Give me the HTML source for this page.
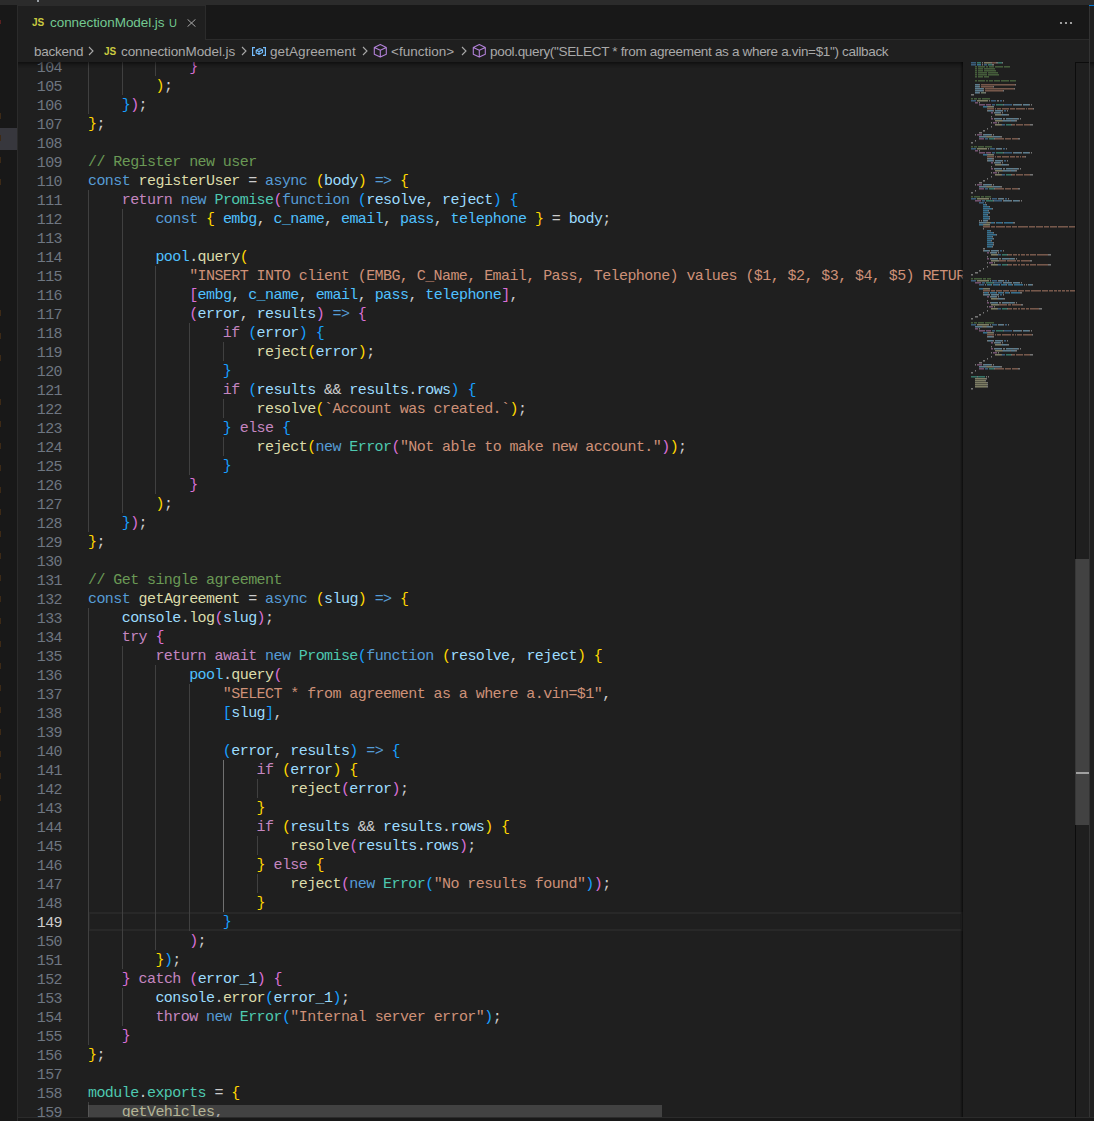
<!DOCTYPE html>
<html><head><meta charset="utf-8">
<style>
*{box-sizing:border-box}
html,body{margin:0;padding:0}
body{width:1094px;height:1121px;overflow:hidden;background:#181818;position:relative;font-family:"Liberation Sans",sans-serif}
.abs{position:absolute}
#top{left:0;top:0;width:1094px;height:5px;background:#2b2b2b}
#side{left:0;top:5px;width:17px;height:1116px;background:#181818}
#sideb{left:17px;top:5px;width:1px;height:1116px;background:#2b2b2b}
#tabs{left:18px;top:5px;width:1071px;height:35px;background:#181818;border-bottom:1px solid #2b2b2b}
#tab{left:18px;top:6px;width:188px;height:34px;background:#1f1f1f;border-right:1px solid #2b2b2b}
#crumbs{left:18px;top:40px;width:1071px;height:22px;background:#1f1f1f}
.ui{position:absolute;white-space:pre;font-size:13px;line-height:16px}
#ed{left:18px;top:62px;width:1071px;height:1055px;background:#1f1f1f;overflow:hidden}
.ln{position:absolute;left:70px;height:19px;line-height:21px;white-space:pre;font-family:"Liberation Mono",monospace;font-size:15px;letter-spacing:-0.573px;color:#cccccc}
.num{position:absolute;left:0;width:44px;text-align:right;height:19px;line-height:23px;font-family:"Liberation Mono",monospace;font-size:15px;letter-spacing:-0.573px;color:#6e7681}
.num.act{color:#cccccc}
.g{position:absolute;width:1px;height:19px;background:#404040}
.g.ga{background:#707070}
#curline{left:70px;width:875px;height:19px;border:2px solid #282828}
#mm{left:945px;top:0;width:112px;height:1055px;background:#1f1f1f}
#mm i{position:absolute;height:1px}
#mmc{position:absolute;left:8px;top:0;width:104px;height:400px}
#mmshadow{left:942px;top:0;width:3px;height:1055px;background:linear-gradient(to right,rgba(0,0,0,0),rgba(0,0,0,.6))}
#vsb{left:1057px;top:0;width:14px;height:1055px;box-shadow:inset 1px 1px 0 #0c0c0c}
#vsl{left:1057px;top:497px;width:14px;height:266px;background:rgba(121,121,121,.4)}
#vcur{left:1058px;top:710px;width:13px;height:2px;background:#a0a0a0}
#hsl{left:70px;top:1043px;width:574px;height:12px;background:rgba(121,121,121,.4)}
#scrollshadow{left:0;top:0;width:945px;height:6px;box-shadow:inset 0 6px 6px -6px #000}
#vsep{left:1089px;top:5px;width:1px;height:1112px;background:#333333}
#rg{left:1090px;top:5px;width:4px;height:1112px;background:#1f1f1f}
#rgtab{left:1089px;top:5px;width:5px;height:1px;background:#0078d4}
#bot{left:17px;top:1117px;width:1077px;height:1px;background:#2b2b2b}
#botb{left:18px;top:1118px;width:1076px;height:3px;background:#181818}
</style></head><body>
<div id="top" class="abs"></div>
<div class="abs" style="left:37px;top:0;width:2px;height:2px;background:#9aa0a6"></div>
<div id="side" class="abs"></div>
<div class="abs" style="left:0;top:128px;width:17px;height:22px;background:#37373d"></div>
<div class="abs" style="left:0;top:113px;width:1px;height:6px;background:#3d2a17"></div><div class="abs" style="left:0;top:135px;width:1px;height:6px;background:#3d2a17"></div><div class="abs" style="left:0;top:157px;width:1px;height:6px;background:#3d2a17"></div><div class="abs" style="left:0;top:179px;width:1px;height:6px;background:#3d2a17"></div><div class="abs" style="left:0;top:310px;width:1px;height:6px;background:#3d2a17"></div><div class="abs" style="left:0;top:333px;width:1px;height:6px;background:#3d2a17"></div><div class="abs" style="left:0;top:355px;width:1px;height:6px;background:#3d2a17"></div><div class="abs" style="left:0;top:399px;width:1px;height:6px;background:#3d2a17"></div><div class="abs" style="left:0;top:421px;width:1px;height:6px;background:#3d2a17"></div><div class="abs" style="left:0;top:443px;width:1px;height:6px;background:#3d2a17"></div><div class="abs" style="left:0;top:465px;width:1px;height:6px;background:#3d2a17"></div><div class="abs" style="left:0;top:487px;width:1px;height:6px;background:#3d2a17"></div><div class="abs" style="left:0;top:509px;width:1px;height:6px;background:#3d2a17"></div><div class="abs" style="left:0;top:531px;width:1px;height:6px;background:#3d2a17"></div><div class="abs" style="left:0;top:553px;width:1px;height:6px;background:#3d2a17"></div><div class="abs" style="left:0;top:575px;width:1px;height:6px;background:#3d2a17"></div><div class="abs" style="left:0;top:596px;width:1px;height:6px;background:#3d2a17"></div><div class="abs" style="left:0;top:618px;width:1px;height:6px;background:#3d2a17"></div><div class="abs" style="left:0;top:641px;width:1px;height:6px;background:#3d2a17"></div><div class="abs" style="left:0;top:663px;width:1px;height:6px;background:#3d2a17"></div><div class="abs" style="left:0;top:685px;width:1px;height:6px;background:#3d2a17"></div><div class="abs" style="left:0;top:707px;width:1px;height:6px;background:#3d2a17"></div><div class="abs" style="left:0;top:729px;width:1px;height:6px;background:#3d2a17"></div><div class="abs" style="left:0;top:751px;width:1px;height:6px;background:#3d2a17"></div><div class="abs" style="left:0;top:773px;width:1px;height:6px;background:#3d2a17"></div><div class="abs" style="left:0;top:795px;width:1px;height:6px;background:#3d2a17"></div><div class="abs" style="left:0;top:20px;width:1px;height:4px;background:#5a2020"></div>
<div id="sideb" class="abs"></div>

<div id="tabs" class="abs"></div>
<div class="abs" style="left:17px;top:5px;width:189px;height:1px;background:#2b2b2b"></div>
<div id="tab" class="abs"></div>
<div class="ui" style="left:32px;top:15px;color:#cbcb41;font-size:10px;font-weight:bold">JS</div>
<div class="ui" style="left:50px;top:15px;color:#73c991;font-size:13.5px;letter-spacing:-0.06px">connectionModel.js</div>
<div class="ui" style="left:169px;top:15px;color:#73c991;font-size:11px">U</div>
<svg class="abs" style="left:187px;top:19px" width="9" height="8" viewBox="0 0 9 8"><path d="M0.5 0.3L8.5 7.7M8.5 0.3L0.5 7.7" stroke="#a8a8a8" stroke-width="1"/></svg>
<svg class="abs" style="left:1059px;top:21px" width="14" height="4" viewBox="0 0 14 4"><circle cx="2" cy="2" r="1.1" fill="#c0c0c0"/><circle cx="7" cy="2" r="1.1" fill="#c0c0c0"/><circle cx="12" cy="2" r="1.1" fill="#c0c0c0"/></svg>

<div id="crumbs" class="abs"></div>
<div class="ui" style="left:34px;top:44px;color:#a9a9a9;font-size:13.5px;letter-spacing:-0.24px">backend</div>
<svg class="abs" style="left:88px;top:46px" width="6" height="10" viewBox="0 0 6 10"><path d="M1 1L5 5L1 9" stroke="#a9a9a9" fill="none" stroke-width="1.1"/></svg>
<div class="ui" style="left:104px;top:44px;color:#cbcb41;font-size:10px;font-weight:bold">JS</div>
<div class="ui" style="left:121px;top:44px;color:#a9a9a9;font-size:13.5px;letter-spacing:-0.08px">connectionModel.js</div>
<svg class="abs" style="left:241px;top:46px" width="6" height="10" viewBox="0 0 6 10"><path d="M1 1L5 5L1 9" stroke="#a9a9a9" fill="none" stroke-width="1.1"/></svg>
<svg class="abs" style="left:248px;top:42px" width="24" height="18" viewBox="0 0 24 18"><path d="M7 5.6H4.6V13.4H7M15 5.6H17.4V13.4H15" stroke="#75beff" fill="none" stroke-width="1.2"/><path d="M8.2 8.3L11.8 6.6L14.6 7.8L14.6 10.4L11 12.4L8.2 11Z M8.2 8.3L11 9.6L14.6 7.8M11 9.6V12.4" stroke="#75beff" fill="none" stroke-width="1.1"/></svg>
<div class="ui" style="left:270px;top:44px;color:#a9a9a9;font-size:13.5px;letter-spacing:0.08px">getAgreement</div>
<svg class="abs" style="left:362px;top:46px" width="6" height="10" viewBox="0 0 6 10"><path d="M1 1L5 5L1 9" stroke="#a9a9a9" fill="none" stroke-width="1.1"/></svg>
<svg class="abs" style="left:372px;top:43px" width="17" height="16" viewBox="0 0 17 16"><path d="M8.3 1.5L14.3 4.4V11.2L8.3 14.1L2.3 11.2V4.4Z M2.3 4.4L8.3 7.3L14.3 4.4 M8.3 7.3V14.1" stroke="#b180d7" fill="none" stroke-width="1.1" stroke-linejoin="round"/></svg>
<div class="ui" style="left:391px;top:44px;color:#a9a9a9;font-size:13.5px;letter-spacing:0px">&lt;function&gt;</div>
<svg class="abs" style="left:461px;top:46px" width="6" height="10" viewBox="0 0 6 10"><path d="M1 1L5 5L1 9" stroke="#a9a9a9" fill="none" stroke-width="1.1"/></svg>
<svg class="abs" style="left:471px;top:43px" width="17" height="16" viewBox="0 0 17 16"><path d="M8.3 1.5L14.3 4.4V11.2L8.3 14.1L2.3 11.2V4.4Z M2.3 4.4L8.3 7.3L14.3 4.4 M8.3 7.3V14.1" stroke="#b180d7" fill="none" stroke-width="1.1" stroke-linejoin="round"/></svg>
<div class="ui" style="left:490px;top:44px;color:#a9a9a9;font-size:13.5px;letter-spacing:-0.32px">pool.query("SELECT * from agreement as a where a.vin=$1") callback</div>

<div id="ed" class="abs">
<div id="curline" class="abs" style="top:850px"></div>
<div class="g" style="left:70px;top:-5px"></div>
<div class="g" style="left:104px;top:-5px"></div>
<div class="g" style="left:137px;top:-5px"></div>
<div class="g" style="left:70px;top:14px"></div>
<div class="g" style="left:104px;top:14px"></div>
<div class="g" style="left:70px;top:33px"></div>
<div class="g" style="left:70px;top:128px"></div>
<div class="g" style="left:70px;top:147px"></div>
<div class="g" style="left:104px;top:147px"></div>
<div class="g" style="left:70px;top:166px"></div>
<div class="g" style="left:104px;top:166px"></div>
<div class="g" style="left:70px;top:185px"></div>
<div class="g" style="left:104px;top:185px"></div>
<div class="g" style="left:70px;top:204px"></div>
<div class="g" style="left:104px;top:204px"></div>
<div class="g" style="left:137px;top:204px"></div>
<div class="g" style="left:70px;top:223px"></div>
<div class="g" style="left:104px;top:223px"></div>
<div class="g" style="left:137px;top:223px"></div>
<div class="g" style="left:70px;top:242px"></div>
<div class="g" style="left:104px;top:242px"></div>
<div class="g" style="left:137px;top:242px"></div>
<div class="g" style="left:70px;top:261px"></div>
<div class="g" style="left:104px;top:261px"></div>
<div class="g" style="left:137px;top:261px"></div>
<div class="g" style="left:171px;top:261px"></div>
<div class="g" style="left:70px;top:280px"></div>
<div class="g" style="left:104px;top:280px"></div>
<div class="g" style="left:137px;top:280px"></div>
<div class="g" style="left:171px;top:280px"></div>
<div class="g" style="left:205px;top:280px"></div>
<div class="g" style="left:70px;top:299px"></div>
<div class="g" style="left:104px;top:299px"></div>
<div class="g" style="left:137px;top:299px"></div>
<div class="g" style="left:171px;top:299px"></div>
<div class="g" style="left:70px;top:318px"></div>
<div class="g" style="left:104px;top:318px"></div>
<div class="g" style="left:137px;top:318px"></div>
<div class="g" style="left:171px;top:318px"></div>
<div class="g" style="left:70px;top:337px"></div>
<div class="g" style="left:104px;top:337px"></div>
<div class="g" style="left:137px;top:337px"></div>
<div class="g" style="left:171px;top:337px"></div>
<div class="g" style="left:205px;top:337px"></div>
<div class="g" style="left:70px;top:356px"></div>
<div class="g" style="left:104px;top:356px"></div>
<div class="g" style="left:137px;top:356px"></div>
<div class="g" style="left:171px;top:356px"></div>
<div class="g" style="left:70px;top:375px"></div>
<div class="g" style="left:104px;top:375px"></div>
<div class="g" style="left:137px;top:375px"></div>
<div class="g" style="left:171px;top:375px"></div>
<div class="g" style="left:205px;top:375px"></div>
<div class="g" style="left:70px;top:394px"></div>
<div class="g" style="left:104px;top:394px"></div>
<div class="g" style="left:137px;top:394px"></div>
<div class="g" style="left:171px;top:394px"></div>
<div class="g" style="left:70px;top:413px"></div>
<div class="g" style="left:104px;top:413px"></div>
<div class="g" style="left:137px;top:413px"></div>
<div class="g" style="left:70px;top:432px"></div>
<div class="g" style="left:104px;top:432px"></div>
<div class="g" style="left:70px;top:451px"></div>
<div class="g" style="left:70px;top:546px"></div>
<div class="g" style="left:70px;top:565px"></div>
<div class="g" style="left:70px;top:584px"></div>
<div class="g" style="left:104px;top:584px"></div>
<div class="g" style="left:70px;top:603px"></div>
<div class="g" style="left:104px;top:603px"></div>
<div class="g" style="left:137px;top:603px"></div>
<div class="g" style="left:70px;top:622px"></div>
<div class="g" style="left:104px;top:622px"></div>
<div class="g" style="left:137px;top:622px"></div>
<div class="g" style="left:171px;top:622px"></div>
<div class="g" style="left:70px;top:641px"></div>
<div class="g" style="left:104px;top:641px"></div>
<div class="g" style="left:137px;top:641px"></div>
<div class="g" style="left:171px;top:641px"></div>
<div class="g" style="left:70px;top:660px"></div>
<div class="g" style="left:104px;top:660px"></div>
<div class="g" style="left:137px;top:660px"></div>
<div class="g" style="left:171px;top:660px"></div>
<div class="g" style="left:70px;top:679px"></div>
<div class="g" style="left:104px;top:679px"></div>
<div class="g" style="left:137px;top:679px"></div>
<div class="g" style="left:171px;top:679px"></div>
<div class="g" style="left:70px;top:698px"></div>
<div class="g" style="left:104px;top:698px"></div>
<div class="g" style="left:137px;top:698px"></div>
<div class="g" style="left:171px;top:698px"></div>
<div class="g ga" style="left:205px;top:698px"></div>
<div class="g" style="left:70px;top:717px"></div>
<div class="g" style="left:104px;top:717px"></div>
<div class="g" style="left:137px;top:717px"></div>
<div class="g" style="left:171px;top:717px"></div>
<div class="g ga" style="left:205px;top:717px"></div>
<div class="g" style="left:239px;top:717px"></div>
<div class="g" style="left:70px;top:736px"></div>
<div class="g" style="left:104px;top:736px"></div>
<div class="g" style="left:137px;top:736px"></div>
<div class="g" style="left:171px;top:736px"></div>
<div class="g ga" style="left:205px;top:736px"></div>
<div class="g" style="left:70px;top:755px"></div>
<div class="g" style="left:104px;top:755px"></div>
<div class="g" style="left:137px;top:755px"></div>
<div class="g" style="left:171px;top:755px"></div>
<div class="g ga" style="left:205px;top:755px"></div>
<div class="g" style="left:70px;top:774px"></div>
<div class="g" style="left:104px;top:774px"></div>
<div class="g" style="left:137px;top:774px"></div>
<div class="g" style="left:171px;top:774px"></div>
<div class="g ga" style="left:205px;top:774px"></div>
<div class="g" style="left:239px;top:774px"></div>
<div class="g" style="left:70px;top:793px"></div>
<div class="g" style="left:104px;top:793px"></div>
<div class="g" style="left:137px;top:793px"></div>
<div class="g" style="left:171px;top:793px"></div>
<div class="g ga" style="left:205px;top:793px"></div>
<div class="g" style="left:70px;top:812px"></div>
<div class="g" style="left:104px;top:812px"></div>
<div class="g" style="left:137px;top:812px"></div>
<div class="g" style="left:171px;top:812px"></div>
<div class="g ga" style="left:205px;top:812px"></div>
<div class="g" style="left:239px;top:812px"></div>
<div class="g" style="left:70px;top:831px"></div>
<div class="g" style="left:104px;top:831px"></div>
<div class="g" style="left:137px;top:831px"></div>
<div class="g" style="left:171px;top:831px"></div>
<div class="g ga" style="left:205px;top:831px"></div>
<div class="g" style="left:70px;top:850px"></div>
<div class="g" style="left:104px;top:850px"></div>
<div class="g" style="left:137px;top:850px"></div>
<div class="g" style="left:171px;top:850px"></div>
<div class="g" style="left:70px;top:869px"></div>
<div class="g" style="left:104px;top:869px"></div>
<div class="g" style="left:137px;top:869px"></div>
<div class="g" style="left:70px;top:888px"></div>
<div class="g" style="left:104px;top:888px"></div>
<div class="g" style="left:70px;top:907px"></div>
<div class="g" style="left:70px;top:926px"></div>
<div class="g" style="left:104px;top:926px"></div>
<div class="g" style="left:70px;top:945px"></div>
<div class="g" style="left:104px;top:945px"></div>
<div class="g" style="left:70px;top:964px"></div>
<div class="g" style="left:70px;top:1040px"></div>
<div class="num" style="top:-5px">104</div>
<div class="num" style="top:14px">105</div>
<div class="num" style="top:33px">106</div>
<div class="num" style="top:52px">107</div>
<div class="num" style="top:71px">108</div>
<div class="num" style="top:90px">109</div>
<div class="num" style="top:109px">110</div>
<div class="num" style="top:128px">111</div>
<div class="num" style="top:147px">112</div>
<div class="num" style="top:166px">113</div>
<div class="num" style="top:185px">114</div>
<div class="num" style="top:204px">115</div>
<div class="num" style="top:223px">116</div>
<div class="num" style="top:242px">117</div>
<div class="num" style="top:261px">118</div>
<div class="num" style="top:280px">119</div>
<div class="num" style="top:299px">120</div>
<div class="num" style="top:318px">121</div>
<div class="num" style="top:337px">122</div>
<div class="num" style="top:356px">123</div>
<div class="num" style="top:375px">124</div>
<div class="num" style="top:394px">125</div>
<div class="num" style="top:413px">126</div>
<div class="num" style="top:432px">127</div>
<div class="num" style="top:451px">128</div>
<div class="num" style="top:470px">129</div>
<div class="num" style="top:489px">130</div>
<div class="num" style="top:508px">131</div>
<div class="num" style="top:527px">132</div>
<div class="num" style="top:546px">133</div>
<div class="num" style="top:565px">134</div>
<div class="num" style="top:584px">135</div>
<div class="num" style="top:603px">136</div>
<div class="num" style="top:622px">137</div>
<div class="num" style="top:641px">138</div>
<div class="num" style="top:660px">139</div>
<div class="num" style="top:679px">140</div>
<div class="num" style="top:698px">141</div>
<div class="num" style="top:717px">142</div>
<div class="num" style="top:736px">143</div>
<div class="num" style="top:755px">144</div>
<div class="num" style="top:774px">145</div>
<div class="num" style="top:793px">146</div>
<div class="num" style="top:812px">147</div>
<div class="num" style="top:831px">148</div>
<div class="num act" style="top:850px">149</div>
<div class="num" style="top:869px">150</div>
<div class="num" style="top:888px">151</div>
<div class="num" style="top:907px">152</div>
<div class="num" style="top:926px">153</div>
<div class="num" style="top:945px">154</div>
<div class="num" style="top:964px">155</div>
<div class="num" style="top:983px">156</div>
<div class="num" style="top:1002px">157</div>
<div class="num" style="top:1021px">158</div>
<div class="num" style="top:1040px">159</div>
<div class="ln" style="top:-5px">            <span style="color:#da70d6">}</span></div>
<div class="ln" style="top:14px">        <span style="color:#ffd700">)</span><span style="color:#cccccc">;</span></div>
<div class="ln" style="top:33px">    <span style="color:#179fff">}</span><span style="color:#da70d6">)</span><span style="color:#cccccc">;</span></div>
<div class="ln" style="top:52px"><span style="color:#ffd700">}</span><span style="color:#cccccc">;</span></div>
<div class="ln" style="top:71px"></div>
<div class="ln" style="top:90px"><span style="color:#6a9955">// Register new user</span></div>
<div class="ln" style="top:109px"><span style="color:#569cd6">const</span> <span style="color:#dcdcaa">registerUser</span> <span style="color:#cccccc">=</span> <span style="color:#569cd6">async</span> <span style="color:#ffd700">(</span><span style="color:#9cdcfe">body</span><span style="color:#ffd700">)</span> <span style="color:#569cd6">=&gt;</span> <span style="color:#ffd700">{</span></div>
<div class="ln" style="top:128px">    <span style="color:#c586c0">return</span> <span style="color:#569cd6">new</span> <span style="color:#4ec9b0">Promise</span><span style="color:#da70d6">(</span><span style="color:#569cd6">function</span> <span style="color:#179fff">(</span><span style="color:#9cdcfe">resolve</span><span style="color:#cccccc">,</span> <span style="color:#9cdcfe">reject</span><span style="color:#179fff">)</span> <span style="color:#179fff">{</span></div>
<div class="ln" style="top:147px">        <span style="color:#569cd6">const</span> <span style="color:#ffd700">{</span> <span style="color:#4fc1ff">embg</span><span style="color:#cccccc">,</span> <span style="color:#4fc1ff">c_name</span><span style="color:#cccccc">,</span> <span style="color:#4fc1ff">email</span><span style="color:#cccccc">,</span> <span style="color:#4fc1ff">pass</span><span style="color:#cccccc">,</span> <span style="color:#4fc1ff">telephone</span> <span style="color:#ffd700">}</span> <span style="color:#cccccc">=</span> <span style="color:#9cdcfe">body</span><span style="color:#cccccc">;</span></div>
<div class="ln" style="top:166px"></div>
<div class="ln" style="top:185px">        <span style="color:#4fc1ff">pool</span><span style="color:#cccccc">.</span><span style="color:#dcdcaa">query</span><span style="color:#ffd700">(</span></div>
<div class="ln" style="top:204px">            <span style="color:#ce9178">"INSERT INTO client (EMBG, C_Name, Email, Pass, Telephone) values ($1, $2, $3, $4, $5) RETURNING *"</span><span style="color:#cccccc">,</span></div>
<div class="ln" style="top:223px">            <span style="color:#da70d6">[</span><span style="color:#4fc1ff">embg</span><span style="color:#cccccc">,</span> <span style="color:#4fc1ff">c_name</span><span style="color:#cccccc">,</span> <span style="color:#4fc1ff">email</span><span style="color:#cccccc">,</span> <span style="color:#4fc1ff">pass</span><span style="color:#cccccc">,</span> <span style="color:#4fc1ff">telephone</span><span style="color:#da70d6">]</span><span style="color:#cccccc">,</span></div>
<div class="ln" style="top:242px">            <span style="color:#da70d6">(</span><span style="color:#9cdcfe">error</span><span style="color:#cccccc">,</span> <span style="color:#9cdcfe">results</span><span style="color:#da70d6">)</span> <span style="color:#569cd6">=&gt;</span> <span style="color:#da70d6">{</span></div>
<div class="ln" style="top:261px">                <span style="color:#c586c0">if</span> <span style="color:#179fff">(</span><span style="color:#9cdcfe">error</span><span style="color:#179fff">)</span> <span style="color:#179fff">{</span></div>
<div class="ln" style="top:280px">                    <span style="color:#dcdcaa">reject</span><span style="color:#ffd700">(</span><span style="color:#9cdcfe">error</span><span style="color:#ffd700">)</span><span style="color:#cccccc">;</span></div>
<div class="ln" style="top:299px">                <span style="color:#179fff">}</span></div>
<div class="ln" style="top:318px">                <span style="color:#c586c0">if</span> <span style="color:#179fff">(</span><span style="color:#9cdcfe">results</span> <span style="color:#cccccc">&amp;</span><span style="color:#cccccc">&amp;</span> <span style="color:#9cdcfe">results</span><span style="color:#cccccc">.</span><span style="color:#9cdcfe">rows</span><span style="color:#179fff">)</span> <span style="color:#179fff">{</span></div>
<div class="ln" style="top:337px">                    <span style="color:#dcdcaa">resolve</span><span style="color:#ffd700">(</span><span style="color:#ce9178">`Account was created.`</span><span style="color:#ffd700">)</span><span style="color:#cccccc">;</span></div>
<div class="ln" style="top:356px">                <span style="color:#179fff">}</span> <span style="color:#c586c0">else</span> <span style="color:#179fff">{</span></div>
<div class="ln" style="top:375px">                    <span style="color:#dcdcaa">reject</span><span style="color:#ffd700">(</span><span style="color:#569cd6">new</span> <span style="color:#4ec9b0">Error</span><span style="color:#da70d6">(</span><span style="color:#ce9178">"Not able to make new account."</span><span style="color:#da70d6">)</span><span style="color:#ffd700">)</span><span style="color:#cccccc">;</span></div>
<div class="ln" style="top:394px">                <span style="color:#179fff">}</span></div>
<div class="ln" style="top:413px">            <span style="color:#da70d6">}</span></div>
<div class="ln" style="top:432px">        <span style="color:#ffd700">)</span><span style="color:#cccccc">;</span></div>
<div class="ln" style="top:451px">    <span style="color:#179fff">}</span><span style="color:#da70d6">)</span><span style="color:#cccccc">;</span></div>
<div class="ln" style="top:470px"><span style="color:#ffd700">}</span><span style="color:#cccccc">;</span></div>
<div class="ln" style="top:489px"></div>
<div class="ln" style="top:508px"><span style="color:#6a9955">// Get single agreement</span></div>
<div class="ln" style="top:527px"><span style="color:#569cd6">const</span> <span style="color:#dcdcaa">getAgreement</span> <span style="color:#cccccc">=</span> <span style="color:#569cd6">async</span> <span style="color:#ffd700">(</span><span style="color:#9cdcfe">slug</span><span style="color:#ffd700">)</span> <span style="color:#569cd6">=&gt;</span> <span style="color:#ffd700">{</span></div>
<div class="ln" style="top:546px">    <span style="color:#9cdcfe">console</span><span style="color:#cccccc">.</span><span style="color:#dcdcaa">log</span><span style="color:#da70d6">(</span><span style="color:#9cdcfe">slug</span><span style="color:#da70d6">)</span><span style="color:#cccccc">;</span></div>
<div class="ln" style="top:565px">    <span style="color:#c586c0">try</span> <span style="color:#da70d6">{</span></div>
<div class="ln" style="top:584px">        <span style="color:#c586c0">return</span> <span style="color:#c586c0">await</span> <span style="color:#569cd6">new</span> <span style="color:#4ec9b0">Promise</span><span style="color:#179fff">(</span><span style="color:#569cd6">function</span> <span style="color:#ffd700">(</span><span style="color:#9cdcfe">resolve</span><span style="color:#cccccc">,</span> <span style="color:#9cdcfe">reject</span><span style="color:#ffd700">)</span> <span style="color:#ffd700">{</span></div>
<div class="ln" style="top:603px">            <span style="color:#4fc1ff">pool</span><span style="color:#cccccc">.</span><span style="color:#dcdcaa">query</span><span style="color:#da70d6">(</span></div>
<div class="ln" style="top:622px">                <span style="color:#ce9178">"SELECT * from agreement as a where a.vin=$1"</span><span style="color:#cccccc">,</span></div>
<div class="ln" style="top:641px">                <span style="color:#179fff">[</span><span style="color:#9cdcfe">slug</span><span style="color:#179fff">]</span><span style="color:#cccccc">,</span></div>
<div class="ln" style="top:660px"></div>
<div class="ln" style="top:679px">                <span style="color:#179fff">(</span><span style="color:#9cdcfe">error</span><span style="color:#cccccc">,</span> <span style="color:#9cdcfe">results</span><span style="color:#179fff">)</span> <span style="color:#569cd6">=&gt;</span> <span style="color:#179fff">{</span></div>
<div class="ln" style="top:698px">                    <span style="color:#c586c0">if</span> <span style="color:#ffd700">(</span><span style="color:#9cdcfe">error</span><span style="color:#ffd700">)</span> <span style="color:#ffd700">{</span></div>
<div class="ln" style="top:717px">                        <span style="color:#dcdcaa">reject</span><span style="color:#da70d6">(</span><span style="color:#9cdcfe">error</span><span style="color:#da70d6">)</span><span style="color:#cccccc">;</span></div>
<div class="ln" style="top:736px">                    <span style="color:#ffd700">}</span></div>
<div class="ln" style="top:755px">                    <span style="color:#c586c0">if</span> <span style="color:#ffd700">(</span><span style="color:#9cdcfe">results</span> <span style="color:#cccccc">&amp;</span><span style="color:#cccccc">&amp;</span> <span style="color:#9cdcfe">results</span><span style="color:#cccccc">.</span><span style="color:#9cdcfe">rows</span><span style="color:#ffd700">)</span> <span style="color:#ffd700">{</span></div>
<div class="ln" style="top:774px">                        <span style="color:#dcdcaa">resolve</span><span style="color:#da70d6">(</span><span style="color:#9cdcfe">results</span><span style="color:#cccccc">.</span><span style="color:#9cdcfe">rows</span><span style="color:#da70d6">)</span><span style="color:#cccccc">;</span></div>
<div class="ln" style="top:793px">                    <span style="color:#ffd700">}</span> <span style="color:#c586c0">else</span> <span style="color:#ffd700">{</span></div>
<div class="ln" style="top:812px">                        <span style="color:#dcdcaa">reject</span><span style="color:#da70d6">(</span><span style="color:#569cd6">new</span> <span style="color:#4ec9b0">Error</span><span style="color:#179fff">(</span><span style="color:#ce9178">"No results found"</span><span style="color:#179fff">)</span><span style="color:#da70d6">)</span><span style="color:#cccccc">;</span></div>
<div class="ln" style="top:831px">                    <span style="color:#ffd700">}</span></div>
<div class="ln" style="top:850px">                <span style="color:#179fff">}</span></div>
<div class="ln" style="top:869px">            <span style="color:#da70d6">)</span><span style="color:#cccccc">;</span></div>
<div class="ln" style="top:888px">        <span style="color:#ffd700">}</span><span style="color:#179fff">)</span><span style="color:#cccccc">;</span></div>
<div class="ln" style="top:907px">    <span style="color:#da70d6">}</span> <span style="color:#c586c0">catch</span> <span style="color:#da70d6">(</span><span style="color:#9cdcfe">error_1</span><span style="color:#da70d6">)</span> <span style="color:#da70d6">{</span></div>
<div class="ln" style="top:926px">        <span style="color:#9cdcfe">console</span><span style="color:#cccccc">.</span><span style="color:#dcdcaa">error</span><span style="color:#179fff">(</span><span style="color:#9cdcfe">error_1</span><span style="color:#179fff">)</span><span style="color:#cccccc">;</span></div>
<div class="ln" style="top:945px">        <span style="color:#c586c0">throw</span> <span style="color:#569cd6">new</span> <span style="color:#4ec9b0">Error</span><span style="color:#179fff">(</span><span style="color:#ce9178">"Internal server error"</span><span style="color:#179fff">)</span><span style="color:#cccccc">;</span></div>
<div class="ln" style="top:964px">    <span style="color:#da70d6">}</span></div>
<div class="ln" style="top:983px"><span style="color:#ffd700">}</span><span style="color:#cccccc">;</span></div>
<div class="ln" style="top:1002px"></div>
<div class="ln" style="top:1021px"><span style="color:#4ec9b0">module</span><span style="color:#cccccc">.</span><span style="color:#4ec9b0">exports</span> <span style="color:#cccccc">=</span> <span style="color:#ffd700">{</span></div>
<div class="ln" style="top:1040px">    <span style="color:#dcdcaa">getVehicles</span><span style="color:#cccccc">,</span></div>
<div id="mmshadow" class="abs"></div>
<div id="mm" class="abs"><div id="mmc"><i style="left:0px;top:0px;width:5px;background:rgba(86,156,214,.5);box-shadow:0 1px 0 rgba(86,156,214,.28)"></i><i style="left:6px;top:0px;width:4px;background:rgba(78,201,176,.5);box-shadow:0 1px 0 rgba(78,201,176,.28)"></i><i style="left:11px;top:0px;width:1px;background:rgba(204,204,204,.5);box-shadow:0 1px 0 rgba(204,204,204,.28)"></i><i style="left:13px;top:0px;width:7px;background:rgba(220,220,170,.5);box-shadow:0 1px 0 rgba(220,220,170,.28)"></i><i style="left:20px;top:0px;width:1px;background:rgba(204,204,204,.5);box-shadow:0 1px 0 rgba(204,204,204,.28)"></i><i style="left:21px;top:0px;width:4px;background:rgba(206,145,120,.5);box-shadow:0 1px 0 rgba(206,145,120,.28)"></i><i style="left:25px;top:0px;width:1px;background:rgba(204,204,204,.5);box-shadow:0 1px 0 rgba(204,204,204,.28)"></i><i style="left:26px;top:0px;width:1px;background:rgba(204,204,204,.5);box-shadow:0 1px 0 rgba(204,204,204,.28)"></i><i style="left:27px;top:0px;width:4px;background:rgba(78,201,176,.5);box-shadow:0 1px 0 rgba(78,201,176,.28)"></i><i style="left:31px;top:0px;width:1px;background:rgba(204,204,204,.5);box-shadow:0 1px 0 rgba(204,204,204,.28)"></i><i style="left:0px;top:2px;width:5px;background:rgba(86,156,214,.5);box-shadow:0 1px 0 rgba(86,156,214,.28)"></i><i style="left:6px;top:2px;width:4px;background:rgba(79,193,255,.5);box-shadow:0 1px 0 rgba(79,193,255,.28)"></i><i style="left:11px;top:2px;width:1px;background:rgba(204,204,204,.5);box-shadow:0 1px 0 rgba(204,204,204,.28)"></i><i style="left:13px;top:2px;width:3px;background:rgba(86,156,214,.5);box-shadow:0 1px 0 rgba(86,156,214,.28)"></i><i style="left:17px;top:2px;width:4px;background:rgba(78,201,176,.5);box-shadow:0 1px 0 rgba(78,201,176,.28)"></i><i style="left:21px;top:2px;width:1px;background:rgba(204,204,204,.5);box-shadow:0 1px 0 rgba(204,204,204,.28)"></i><i style="left:22px;top:2px;width:1px;background:rgba(204,204,204,.5);box-shadow:0 1px 0 rgba(204,204,204,.28)"></i><i style="left:4px;top:4px;width:2px;background:rgba(106,153,85,.5);box-shadow:0 1px 0 rgba(106,153,85,.28)"></i><i style="left:7px;top:4px;width:7px;background:rgba(106,153,85,.5);box-shadow:0 1px 0 rgba(106,153,85,.28)"></i><i style="left:15px;top:4px;width:2px;background:rgba(106,153,85,.5);box-shadow:0 1px 0 rgba(106,153,85,.28)"></i><i style="left:18px;top:4px;width:5px;background:rgba(106,153,85,.5);box-shadow:0 1px 0 rgba(106,153,85,.28)"></i><i style="left:24px;top:4px;width:8px;background:rgba(106,153,85,.5);box-shadow:0 1px 0 rgba(106,153,85,.28)"></i><i style="left:33px;top:4px;width:6px;background:rgba(106,153,85,.5);box-shadow:0 1px 0 rgba(106,153,85,.28)"></i><i style="left:4px;top:6px;width:2px;background:rgba(106,153,85,.5);box-shadow:0 1px 0 rgba(106,153,85,.28)"></i><i style="left:7px;top:6px;width:5px;background:rgba(106,153,85,.5);box-shadow:0 1px 0 rgba(106,153,85,.28)"></i><i style="left:13px;top:6px;width:11px;background:rgba(106,153,85,.5);box-shadow:0 1px 0 rgba(106,153,85,.28)"></i><i style="left:4px;top:8px;width:2px;background:rgba(106,153,85,.5);box-shadow:0 1px 0 rgba(106,153,85,.28)"></i><i style="left:7px;top:8px;width:5px;background:rgba(106,153,85,.5);box-shadow:0 1px 0 rgba(106,153,85,.28)"></i><i style="left:13px;top:8px;width:12px;background:rgba(106,153,85,.5);box-shadow:0 1px 0 rgba(106,153,85,.28)"></i><i style="left:4px;top:10px;width:2px;background:rgba(106,153,85,.5);box-shadow:0 1px 0 rgba(106,153,85,.28)"></i><i style="left:7px;top:10px;width:9px;background:rgba(106,153,85,.5);box-shadow:0 1px 0 rgba(106,153,85,.28)"></i><i style="left:17px;top:10px;width:10px;background:rgba(106,153,85,.5);box-shadow:0 1px 0 rgba(106,153,85,.28)"></i><i style="left:4px;top:12px;width:2px;background:rgba(106,153,85,.5);box-shadow:0 1px 0 rgba(106,153,85,.28)"></i><i style="left:7px;top:12px;width:9px;background:rgba(106,153,85,.5);box-shadow:0 1px 0 rgba(106,153,85,.28)"></i><i style="left:17px;top:12px;width:11px;background:rgba(106,153,85,.5);box-shadow:0 1px 0 rgba(106,153,85,.28)"></i><i style="left:4px;top:14px;width:2px;background:rgba(106,153,85,.5);box-shadow:0 1px 0 rgba(106,153,85,.28)"></i><i style="left:7px;top:14px;width:5px;background:rgba(106,153,85,.5);box-shadow:0 1px 0 rgba(106,153,85,.28)"></i><i style="left:13px;top:14px;width:5px;background:rgba(106,153,85,.5);box-shadow:0 1px 0 rgba(106,153,85,.28)"></i><i style="left:4px;top:18px;width:2px;background:rgba(106,153,85,.5);box-shadow:0 1px 0 rgba(106,153,85,.28)"></i><i style="left:7px;top:18px;width:7px;background:rgba(106,153,85,.5);box-shadow:0 1px 0 rgba(106,153,85,.28)"></i><i style="left:15px;top:18px;width:2px;background:rgba(106,153,85,.5);box-shadow:0 1px 0 rgba(106,153,85,.28)"></i><i style="left:18px;top:18px;width:4px;background:rgba(106,153,85,.5);box-shadow:0 1px 0 rgba(106,153,85,.28)"></i><i style="left:23px;top:18px;width:6px;background:rgba(106,153,85,.5);box-shadow:0 1px 0 rgba(106,153,85,.28)"></i><i style="left:30px;top:18px;width:8px;background:rgba(106,153,85,.5);box-shadow:0 1px 0 rgba(106,153,85,.28)"></i><i style="left:39px;top:18px;width:6px;background:rgba(106,153,85,.5);box-shadow:0 1px 0 rgba(106,153,85,.28)"></i><i style="left:4px;top:22px;width:4px;background:rgba(156,220,254,.5);box-shadow:0 1px 0 rgba(156,220,254,.28)"></i><i style="left:8px;top:22px;width:1px;background:rgba(204,204,204,.5);box-shadow:0 1px 0 rgba(204,204,204,.28)"></i><i style="left:10px;top:22px;width:34px;background:rgba(206,145,120,.5);box-shadow:0 1px 0 rgba(206,145,120,.28)"></i><i style="left:44px;top:22px;width:1px;background:rgba(204,204,204,.5);box-shadow:0 1px 0 rgba(204,204,204,.28)"></i><i style="left:4px;top:24px;width:4px;background:rgba(156,220,254,.5);box-shadow:0 1px 0 rgba(156,220,254,.28)"></i><i style="left:8px;top:24px;width:1px;background:rgba(204,204,204,.5);box-shadow:0 1px 0 rgba(204,204,204,.28)"></i><i style="left:10px;top:24px;width:12px;background:rgba(206,145,120,.5);box-shadow:0 1px 0 rgba(206,145,120,.28)"></i><i style="left:22px;top:24px;width:1px;background:rgba(204,204,204,.5);box-shadow:0 1px 0 rgba(204,204,204,.28)"></i><i style="left:4px;top:26px;width:8px;background:rgba(156,220,254,.5);box-shadow:0 1px 0 rgba(156,220,254,.28)"></i><i style="left:12px;top:26px;width:1px;background:rgba(204,204,204,.5);box-shadow:0 1px 0 rgba(204,204,204,.28)"></i><i style="left:14px;top:26px;width:29px;background:rgba(206,145,120,.5);box-shadow:0 1px 0 rgba(206,145,120,.28)"></i><i style="left:43px;top:26px;width:1px;background:rgba(204,204,204,.5);box-shadow:0 1px 0 rgba(204,204,204,.28)"></i><i style="left:4px;top:28px;width:8px;background:rgba(156,220,254,.5);box-shadow:0 1px 0 rgba(156,220,254,.28)"></i><i style="left:12px;top:28px;width:1px;background:rgba(204,204,204,.5);box-shadow:0 1px 0 rgba(204,204,204,.28)"></i><i style="left:14px;top:28px;width:18px;background:rgba(206,145,120,.5);box-shadow:0 1px 0 rgba(206,145,120,.28)"></i><i style="left:32px;top:28px;width:1px;background:rgba(204,204,204,.5);box-shadow:0 1px 0 rgba(204,204,204,.28)"></i><i style="left:4px;top:30px;width:4px;background:rgba(156,220,254,.5);box-shadow:0 1px 0 rgba(156,220,254,.28)"></i><i style="left:8px;top:30px;width:1px;background:rgba(204,204,204,.5);box-shadow:0 1px 0 rgba(204,204,204,.28)"></i><i style="left:10px;top:30px;width:4px;background:rgba(181,206,168,.5);box-shadow:0 1px 0 rgba(181,206,168,.28)"></i><i style="left:14px;top:30px;width:1px;background:rgba(204,204,204,.5);box-shadow:0 1px 0 rgba(204,204,204,.28)"></i><i style="left:0px;top:32px;width:1px;background:rgba(204,204,204,.5);box-shadow:0 1px 0 rgba(204,204,204,.28)"></i><i style="left:1px;top:32px;width:1px;background:rgba(204,204,204,.5);box-shadow:0 1px 0 rgba(204,204,204,.28)"></i><i style="left:2px;top:32px;width:1px;background:rgba(204,204,204,.5);box-shadow:0 1px 0 rgba(204,204,204,.28)"></i><i style="left:0px;top:36px;width:2px;background:rgba(106,153,85,.5);box-shadow:0 1px 0 rgba(106,153,85,.28)"></i><i style="left:3px;top:36px;width:3px;background:rgba(106,153,85,.5);box-shadow:0 1px 0 rgba(106,153,85,.28)"></i><i style="left:7px;top:36px;width:3px;background:rgba(106,153,85,.5);box-shadow:0 1px 0 rgba(106,153,85,.28)"></i><i style="left:11px;top:36px;width:8px;background:rgba(106,153,85,.5);box-shadow:0 1px 0 rgba(106,153,85,.28)"></i><i style="left:0px;top:38px;width:5px;background:rgba(86,156,214,.5);box-shadow:0 1px 0 rgba(86,156,214,.28)"></i><i style="left:6px;top:38px;width:11px;background:rgba(220,220,170,.5);box-shadow:0 1px 0 rgba(220,220,170,.28)"></i><i style="left:18px;top:38px;width:1px;background:rgba(204,204,204,.5);box-shadow:0 1px 0 rgba(204,204,204,.28)"></i><i style="left:20px;top:38px;width:5px;background:rgba(86,156,214,.5);box-shadow:0 1px 0 rgba(86,156,214,.28)"></i><i style="left:26px;top:38px;width:1px;background:rgba(204,204,204,.5);box-shadow:0 1px 0 rgba(204,204,204,.28)"></i><i style="left:27px;top:38px;width:1px;background:rgba(204,204,204,.5);box-shadow:0 1px 0 rgba(204,204,204,.28)"></i><i style="left:29px;top:38px;width:2px;background:rgba(86,156,214,.5);box-shadow:0 1px 0 rgba(86,156,214,.28)"></i><i style="left:32px;top:38px;width:1px;background:rgba(204,204,204,.5);box-shadow:0 1px 0 rgba(204,204,204,.28)"></i><i style="left:4px;top:40px;width:3px;background:rgba(197,134,192,.5);box-shadow:0 1px 0 rgba(197,134,192,.28)"></i><i style="left:8px;top:40px;width:1px;background:rgba(204,204,204,.5);box-shadow:0 1px 0 rgba(204,204,204,.28)"></i><i style="left:8px;top:42px;width:6px;background:rgba(197,134,192,.5);box-shadow:0 1px 0 rgba(197,134,192,.28)"></i><i style="left:15px;top:42px;width:5px;background:rgba(197,134,192,.5);box-shadow:0 1px 0 rgba(197,134,192,.28)"></i><i style="left:21px;top:42px;width:3px;background:rgba(86,156,214,.5);box-shadow:0 1px 0 rgba(86,156,214,.28)"></i><i style="left:25px;top:42px;width:7px;background:rgba(78,201,176,.5);box-shadow:0 1px 0 rgba(78,201,176,.28)"></i><i style="left:32px;top:42px;width:1px;background:rgba(204,204,204,.5);box-shadow:0 1px 0 rgba(204,204,204,.28)"></i><i style="left:33px;top:42px;width:8px;background:rgba(86,156,214,.5);box-shadow:0 1px 0 rgba(86,156,214,.28)"></i><i style="left:42px;top:42px;width:1px;background:rgba(204,204,204,.5);box-shadow:0 1px 0 rgba(204,204,204,.28)"></i><i style="left:43px;top:42px;width:7px;background:rgba(156,220,254,.5);box-shadow:0 1px 0 rgba(156,220,254,.28)"></i><i style="left:50px;top:42px;width:1px;background:rgba(204,204,204,.5);box-shadow:0 1px 0 rgba(204,204,204,.28)"></i><i style="left:52px;top:42px;width:6px;background:rgba(156,220,254,.5);box-shadow:0 1px 0 rgba(156,220,254,.28)"></i><i style="left:58px;top:42px;width:1px;background:rgba(204,204,204,.5);box-shadow:0 1px 0 rgba(204,204,204,.28)"></i><i style="left:60px;top:42px;width:1px;background:rgba(204,204,204,.5);box-shadow:0 1px 0 rgba(204,204,204,.28)"></i><i style="left:12px;top:44px;width:4px;background:rgba(79,193,255,.5);box-shadow:0 1px 0 rgba(79,193,255,.28)"></i><i style="left:16px;top:44px;width:1px;background:rgba(204,204,204,.5);box-shadow:0 1px 0 rgba(204,204,204,.28)"></i><i style="left:17px;top:44px;width:5px;background:rgba(220,220,170,.5);box-shadow:0 1px 0 rgba(220,220,170,.28)"></i><i style="left:22px;top:44px;width:1px;background:rgba(204,204,204,.5);box-shadow:0 1px 0 rgba(204,204,204,.28)"></i><i style="left:16px;top:46px;width:7px;background:rgba(206,145,120,.5);box-shadow:0 1px 0 rgba(206,145,120,.28)"></i><i style="left:24px;top:46px;width:1px;background:rgba(206,145,120,.5);box-shadow:0 1px 0 rgba(206,145,120,.28)"></i><i style="left:26px;top:46px;width:4px;background:rgba(206,145,120,.5);box-shadow:0 1px 0 rgba(206,145,120,.28)"></i><i style="left:31px;top:46px;width:7px;background:rgba(206,145,120,.5);box-shadow:0 1px 0 rgba(206,145,120,.28)"></i><i style="left:39px;top:46px;width:5px;background:rgba(206,145,120,.5);box-shadow:0 1px 0 rgba(206,145,120,.28)"></i><i style="left:45px;top:46px;width:9px;background:rgba(206,145,120,.5);box-shadow:0 1px 0 rgba(206,145,120,.28)"></i><i style="left:55px;top:46px;width:1px;background:rgba(206,145,120,.5);box-shadow:0 1px 0 rgba(206,145,120,.28)"></i><i style="left:57px;top:46px;width:5px;background:rgba(206,145,120,.5);box-shadow:0 1px 0 rgba(206,145,120,.28)"></i><i style="left:62px;top:46px;width:1px;background:rgba(204,204,204,.5);box-shadow:0 1px 0 rgba(204,204,204,.28)"></i><i style="left:16px;top:48px;width:1px;background:rgba(204,204,204,.5);box-shadow:0 1px 0 rgba(204,204,204,.28)"></i><i style="left:17px;top:48px;width:5px;background:rgba(156,220,254,.5);box-shadow:0 1px 0 rgba(156,220,254,.28)"></i><i style="left:22px;top:48px;width:1px;background:rgba(204,204,204,.5);box-shadow:0 1px 0 rgba(204,204,204,.28)"></i><i style="left:24px;top:48px;width:7px;background:rgba(156,220,254,.5);box-shadow:0 1px 0 rgba(156,220,254,.28)"></i><i style="left:31px;top:48px;width:1px;background:rgba(204,204,204,.5);box-shadow:0 1px 0 rgba(204,204,204,.28)"></i><i style="left:33px;top:48px;width:2px;background:rgba(86,156,214,.5);box-shadow:0 1px 0 rgba(86,156,214,.28)"></i><i style="left:36px;top:48px;width:1px;background:rgba(204,204,204,.5);box-shadow:0 1px 0 rgba(204,204,204,.28)"></i><i style="left:20px;top:50px;width:2px;background:rgba(197,134,192,.5);box-shadow:0 1px 0 rgba(197,134,192,.28)"></i><i style="left:23px;top:50px;width:1px;background:rgba(204,204,204,.5);box-shadow:0 1px 0 rgba(204,204,204,.28)"></i><i style="left:24px;top:50px;width:5px;background:rgba(156,220,254,.5);box-shadow:0 1px 0 rgba(156,220,254,.28)"></i><i style="left:29px;top:50px;width:1px;background:rgba(204,204,204,.5);box-shadow:0 1px 0 rgba(204,204,204,.28)"></i><i style="left:31px;top:50px;width:1px;background:rgba(204,204,204,.5);box-shadow:0 1px 0 rgba(204,204,204,.28)"></i><i style="left:24px;top:52px;width:6px;background:rgba(220,220,170,.5);box-shadow:0 1px 0 rgba(220,220,170,.28)"></i><i style="left:30px;top:52px;width:1px;background:rgba(204,204,204,.5);box-shadow:0 1px 0 rgba(204,204,204,.28)"></i><i style="left:31px;top:52px;width:5px;background:rgba(156,220,254,.5);box-shadow:0 1px 0 rgba(156,220,254,.28)"></i><i style="left:36px;top:52px;width:1px;background:rgba(204,204,204,.5);box-shadow:0 1px 0 rgba(204,204,204,.28)"></i><i style="left:37px;top:52px;width:1px;background:rgba(204,204,204,.5);box-shadow:0 1px 0 rgba(204,204,204,.28)"></i><i style="left:20px;top:54px;width:1px;background:rgba(204,204,204,.5);box-shadow:0 1px 0 rgba(204,204,204,.28)"></i><i style="left:20px;top:56px;width:2px;background:rgba(197,134,192,.5);box-shadow:0 1px 0 rgba(197,134,192,.28)"></i><i style="left:23px;top:56px;width:1px;background:rgba(204,204,204,.5);box-shadow:0 1px 0 rgba(204,204,204,.28)"></i><i style="left:24px;top:56px;width:7px;background:rgba(156,220,254,.5);box-shadow:0 1px 0 rgba(156,220,254,.28)"></i><i style="left:32px;top:56px;width:1px;background:rgba(204,204,204,.5);box-shadow:0 1px 0 rgba(204,204,204,.28)"></i><i style="left:33px;top:56px;width:1px;background:rgba(204,204,204,.5);box-shadow:0 1px 0 rgba(204,204,204,.28)"></i><i style="left:35px;top:56px;width:7px;background:rgba(156,220,254,.5);box-shadow:0 1px 0 rgba(156,220,254,.28)"></i><i style="left:42px;top:56px;width:1px;background:rgba(204,204,204,.5);box-shadow:0 1px 0 rgba(204,204,204,.28)"></i><i style="left:43px;top:56px;width:4px;background:rgba(156,220,254,.5);box-shadow:0 1px 0 rgba(156,220,254,.28)"></i><i style="left:47px;top:56px;width:1px;background:rgba(204,204,204,.5);box-shadow:0 1px 0 rgba(204,204,204,.28)"></i><i style="left:49px;top:56px;width:1px;background:rgba(204,204,204,.5);box-shadow:0 1px 0 rgba(204,204,204,.28)"></i><i style="left:24px;top:58px;width:7px;background:rgba(220,220,170,.5);box-shadow:0 1px 0 rgba(220,220,170,.28)"></i><i style="left:31px;top:58px;width:1px;background:rgba(204,204,204,.5);box-shadow:0 1px 0 rgba(204,204,204,.28)"></i><i style="left:32px;top:58px;width:7px;background:rgba(156,220,254,.5);box-shadow:0 1px 0 rgba(156,220,254,.28)"></i><i style="left:39px;top:58px;width:1px;background:rgba(204,204,204,.5);box-shadow:0 1px 0 rgba(204,204,204,.28)"></i><i style="left:40px;top:58px;width:4px;background:rgba(156,220,254,.5);box-shadow:0 1px 0 rgba(156,220,254,.28)"></i><i style="left:44px;top:58px;width:1px;background:rgba(204,204,204,.5);box-shadow:0 1px 0 rgba(204,204,204,.28)"></i><i style="left:45px;top:58px;width:1px;background:rgba(204,204,204,.5);box-shadow:0 1px 0 rgba(204,204,204,.28)"></i><i style="left:20px;top:60px;width:1px;background:rgba(204,204,204,.5);box-shadow:0 1px 0 rgba(204,204,204,.28)"></i><i style="left:22px;top:60px;width:4px;background:rgba(197,134,192,.5);box-shadow:0 1px 0 rgba(197,134,192,.28)"></i><i style="left:27px;top:60px;width:1px;background:rgba(204,204,204,.5);box-shadow:0 1px 0 rgba(204,204,204,.28)"></i><i style="left:24px;top:62px;width:6px;background:rgba(220,220,170,.5);box-shadow:0 1px 0 rgba(220,220,170,.28)"></i><i style="left:30px;top:62px;width:1px;background:rgba(204,204,204,.5);box-shadow:0 1px 0 rgba(204,204,204,.28)"></i><i style="left:31px;top:62px;width:3px;background:rgba(86,156,214,.5);box-shadow:0 1px 0 rgba(86,156,214,.28)"></i><i style="left:35px;top:62px;width:5px;background:rgba(78,201,176,.5);box-shadow:0 1px 0 rgba(78,201,176,.28)"></i><i style="left:40px;top:62px;width:1px;background:rgba(204,204,204,.5);box-shadow:0 1px 0 rgba(204,204,204,.28)"></i><i style="left:41px;top:62px;width:3px;background:rgba(206,145,120,.5);box-shadow:0 1px 0 rgba(206,145,120,.28)"></i><i style="left:45px;top:62px;width:7px;background:rgba(206,145,120,.5);box-shadow:0 1px 0 rgba(206,145,120,.28)"></i><i style="left:53px;top:62px;width:6px;background:rgba(206,145,120,.5);box-shadow:0 1px 0 rgba(206,145,120,.28)"></i><i style="left:59px;top:62px;width:1px;background:rgba(204,204,204,.5);box-shadow:0 1px 0 rgba(204,204,204,.28)"></i><i style="left:60px;top:62px;width:1px;background:rgba(204,204,204,.5);box-shadow:0 1px 0 rgba(204,204,204,.28)"></i><i style="left:61px;top:62px;width:1px;background:rgba(204,204,204,.5);box-shadow:0 1px 0 rgba(204,204,204,.28)"></i><i style="left:20px;top:64px;width:1px;background:rgba(204,204,204,.5);box-shadow:0 1px 0 rgba(204,204,204,.28)"></i><i style="left:16px;top:66px;width:1px;background:rgba(204,204,204,.5);box-shadow:0 1px 0 rgba(204,204,204,.28)"></i><i style="left:12px;top:68px;width:1px;background:rgba(204,204,204,.5);box-shadow:0 1px 0 rgba(204,204,204,.28)"></i><i style="left:13px;top:68px;width:1px;background:rgba(204,204,204,.5);box-shadow:0 1px 0 rgba(204,204,204,.28)"></i><i style="left:8px;top:70px;width:1px;background:rgba(204,204,204,.5);box-shadow:0 1px 0 rgba(204,204,204,.28)"></i><i style="left:9px;top:70px;width:1px;background:rgba(204,204,204,.5);box-shadow:0 1px 0 rgba(204,204,204,.28)"></i><i style="left:10px;top:70px;width:1px;background:rgba(204,204,204,.5);box-shadow:0 1px 0 rgba(204,204,204,.28)"></i><i style="left:4px;top:72px;width:1px;background:rgba(204,204,204,.5);box-shadow:0 1px 0 rgba(204,204,204,.28)"></i><i style="left:6px;top:72px;width:5px;background:rgba(197,134,192,.5);box-shadow:0 1px 0 rgba(197,134,192,.28)"></i><i style="left:12px;top:72px;width:1px;background:rgba(204,204,204,.5);box-shadow:0 1px 0 rgba(204,204,204,.28)"></i><i style="left:13px;top:72px;width:7px;background:rgba(156,220,254,.5);box-shadow:0 1px 0 rgba(156,220,254,.28)"></i><i style="left:20px;top:72px;width:1px;background:rgba(204,204,204,.5);box-shadow:0 1px 0 rgba(204,204,204,.28)"></i><i style="left:22px;top:72px;width:1px;background:rgba(204,204,204,.5);box-shadow:0 1px 0 rgba(204,204,204,.28)"></i><i style="left:8px;top:74px;width:7px;background:rgba(156,220,254,.5);box-shadow:0 1px 0 rgba(156,220,254,.28)"></i><i style="left:15px;top:74px;width:1px;background:rgba(204,204,204,.5);box-shadow:0 1px 0 rgba(204,204,204,.28)"></i><i style="left:16px;top:74px;width:5px;background:rgba(220,220,170,.5);box-shadow:0 1px 0 rgba(220,220,170,.28)"></i><i style="left:21px;top:74px;width:1px;background:rgba(204,204,204,.5);box-shadow:0 1px 0 rgba(204,204,204,.28)"></i><i style="left:22px;top:74px;width:7px;background:rgba(156,220,254,.5);box-shadow:0 1px 0 rgba(156,220,254,.28)"></i><i style="left:29px;top:74px;width:1px;background:rgba(204,204,204,.5);box-shadow:0 1px 0 rgba(204,204,204,.28)"></i><i style="left:30px;top:74px;width:1px;background:rgba(204,204,204,.5);box-shadow:0 1px 0 rgba(204,204,204,.28)"></i><i style="left:8px;top:76px;width:5px;background:rgba(197,134,192,.5);box-shadow:0 1px 0 rgba(197,134,192,.28)"></i><i style="left:14px;top:76px;width:3px;background:rgba(86,156,214,.5);box-shadow:0 1px 0 rgba(86,156,214,.28)"></i><i style="left:18px;top:76px;width:5px;background:rgba(78,201,176,.5);box-shadow:0 1px 0 rgba(78,201,176,.28)"></i><i style="left:23px;top:76px;width:1px;background:rgba(204,204,204,.5);box-shadow:0 1px 0 rgba(204,204,204,.28)"></i><i style="left:24px;top:76px;width:9px;background:rgba(206,145,120,.5);box-shadow:0 1px 0 rgba(206,145,120,.28)"></i><i style="left:34px;top:76px;width:6px;background:rgba(206,145,120,.5);box-shadow:0 1px 0 rgba(206,145,120,.28)"></i><i style="left:41px;top:76px;width:6px;background:rgba(206,145,120,.5);box-shadow:0 1px 0 rgba(206,145,120,.28)"></i><i style="left:47px;top:76px;width:1px;background:rgba(204,204,204,.5);box-shadow:0 1px 0 rgba(204,204,204,.28)"></i><i style="left:48px;top:76px;width:1px;background:rgba(204,204,204,.5);box-shadow:0 1px 0 rgba(204,204,204,.28)"></i><i style="left:4px;top:78px;width:1px;background:rgba(204,204,204,.5);box-shadow:0 1px 0 rgba(204,204,204,.28)"></i><i style="left:0px;top:80px;width:1px;background:rgba(204,204,204,.5);box-shadow:0 1px 0 rgba(204,204,204,.28)"></i><i style="left:1px;top:80px;width:1px;background:rgba(204,204,204,.5);box-shadow:0 1px 0 rgba(204,204,204,.28)"></i><i style="left:0px;top:84px;width:2px;background:rgba(106,153,85,.5);box-shadow:0 1px 0 rgba(106,153,85,.28)"></i><i style="left:3px;top:84px;width:3px;background:rgba(106,153,85,.5);box-shadow:0 1px 0 rgba(106,153,85,.28)"></i><i style="left:7px;top:84px;width:6px;background:rgba(106,153,85,.5);box-shadow:0 1px 0 rgba(106,153,85,.28)"></i><i style="left:14px;top:84px;width:7px;background:rgba(106,153,85,.5);box-shadow:0 1px 0 rgba(106,153,85,.28)"></i><i style="left:0px;top:86px;width:5px;background:rgba(86,156,214,.5);box-shadow:0 1px 0 rgba(86,156,214,.28)"></i><i style="left:6px;top:86px;width:10px;background:rgba(220,220,170,.5);box-shadow:0 1px 0 rgba(220,220,170,.28)"></i><i style="left:17px;top:86px;width:1px;background:rgba(204,204,204,.5);box-shadow:0 1px 0 rgba(204,204,204,.28)"></i><i style="left:19px;top:86px;width:5px;background:rgba(86,156,214,.5);box-shadow:0 1px 0 rgba(86,156,214,.28)"></i><i style="left:25px;top:86px;width:1px;background:rgba(204,204,204,.5);box-shadow:0 1px 0 rgba(204,204,204,.28)"></i><i style="left:26px;top:86px;width:4px;background:rgba(156,220,254,.5);box-shadow:0 1px 0 rgba(156,220,254,.28)"></i><i style="left:30px;top:86px;width:1px;background:rgba(204,204,204,.5);box-shadow:0 1px 0 rgba(204,204,204,.28)"></i><i style="left:32px;top:86px;width:2px;background:rgba(86,156,214,.5);box-shadow:0 1px 0 rgba(86,156,214,.28)"></i><i style="left:35px;top:86px;width:1px;background:rgba(204,204,204,.5);box-shadow:0 1px 0 rgba(204,204,204,.28)"></i><i style="left:4px;top:88px;width:3px;background:rgba(197,134,192,.5);box-shadow:0 1px 0 rgba(197,134,192,.28)"></i><i style="left:8px;top:88px;width:1px;background:rgba(204,204,204,.5);box-shadow:0 1px 0 rgba(204,204,204,.28)"></i><i style="left:8px;top:90px;width:6px;background:rgba(197,134,192,.5);box-shadow:0 1px 0 rgba(197,134,192,.28)"></i><i style="left:15px;top:90px;width:5px;background:rgba(197,134,192,.5);box-shadow:0 1px 0 rgba(197,134,192,.28)"></i><i style="left:21px;top:90px;width:3px;background:rgba(86,156,214,.5);box-shadow:0 1px 0 rgba(86,156,214,.28)"></i><i style="left:25px;top:90px;width:7px;background:rgba(78,201,176,.5);box-shadow:0 1px 0 rgba(78,201,176,.28)"></i><i style="left:32px;top:90px;width:1px;background:rgba(204,204,204,.5);box-shadow:0 1px 0 rgba(204,204,204,.28)"></i><i style="left:33px;top:90px;width:8px;background:rgba(86,156,214,.5);box-shadow:0 1px 0 rgba(86,156,214,.28)"></i><i style="left:42px;top:90px;width:1px;background:rgba(204,204,204,.5);box-shadow:0 1px 0 rgba(204,204,204,.28)"></i><i style="left:43px;top:90px;width:7px;background:rgba(156,220,254,.5);box-shadow:0 1px 0 rgba(156,220,254,.28)"></i><i style="left:50px;top:90px;width:1px;background:rgba(204,204,204,.5);box-shadow:0 1px 0 rgba(204,204,204,.28)"></i><i style="left:52px;top:90px;width:6px;background:rgba(156,220,254,.5);box-shadow:0 1px 0 rgba(156,220,254,.28)"></i><i style="left:58px;top:90px;width:1px;background:rgba(204,204,204,.5);box-shadow:0 1px 0 rgba(204,204,204,.28)"></i><i style="left:60px;top:90px;width:1px;background:rgba(204,204,204,.5);box-shadow:0 1px 0 rgba(204,204,204,.28)"></i><i style="left:12px;top:92px;width:4px;background:rgba(79,193,255,.5);box-shadow:0 1px 0 rgba(79,193,255,.28)"></i><i style="left:16px;top:92px;width:1px;background:rgba(204,204,204,.5);box-shadow:0 1px 0 rgba(204,204,204,.28)"></i><i style="left:17px;top:92px;width:5px;background:rgba(220,220,170,.5);box-shadow:0 1px 0 rgba(220,220,170,.28)"></i><i style="left:22px;top:92px;width:1px;background:rgba(204,204,204,.5);box-shadow:0 1px 0 rgba(204,204,204,.28)"></i><i style="left:16px;top:94px;width:7px;background:rgba(206,145,120,.5);box-shadow:0 1px 0 rgba(206,145,120,.28)"></i><i style="left:24px;top:94px;width:1px;background:rgba(206,145,120,.5);box-shadow:0 1px 0 rgba(206,145,120,.28)"></i><i style="left:26px;top:94px;width:4px;background:rgba(206,145,120,.5);box-shadow:0 1px 0 rgba(206,145,120,.28)"></i><i style="left:31px;top:94px;width:7px;background:rgba(206,145,120,.5);box-shadow:0 1px 0 rgba(206,145,120,.28)"></i><i style="left:39px;top:94px;width:5px;background:rgba(206,145,120,.5);box-shadow:0 1px 0 rgba(206,145,120,.28)"></i><i style="left:45px;top:94px;width:3px;background:rgba(206,145,120,.5);box-shadow:0 1px 0 rgba(206,145,120,.28)"></i><i style="left:49px;top:94px;width:1px;background:rgba(206,145,120,.5);box-shadow:0 1px 0 rgba(206,145,120,.28)"></i><i style="left:51px;top:94px;width:3px;background:rgba(206,145,120,.5);box-shadow:0 1px 0 rgba(206,145,120,.28)"></i><i style="left:54px;top:94px;width:1px;background:rgba(204,204,204,.5);box-shadow:0 1px 0 rgba(204,204,204,.28)"></i><i style="left:16px;top:96px;width:1px;background:rgba(204,204,204,.5);box-shadow:0 1px 0 rgba(204,204,204,.28)"></i><i style="left:17px;top:96px;width:4px;background:rgba(156,220,254,.5);box-shadow:0 1px 0 rgba(156,220,254,.28)"></i><i style="left:21px;top:96px;width:1px;background:rgba(204,204,204,.5);box-shadow:0 1px 0 rgba(204,204,204,.28)"></i><i style="left:22px;top:96px;width:1px;background:rgba(204,204,204,.5);box-shadow:0 1px 0 rgba(204,204,204,.28)"></i><i style="left:16px;top:98px;width:1px;background:rgba(204,204,204,.5);box-shadow:0 1px 0 rgba(204,204,204,.28)"></i><i style="left:17px;top:98px;width:5px;background:rgba(156,220,254,.5);box-shadow:0 1px 0 rgba(156,220,254,.28)"></i><i style="left:22px;top:98px;width:1px;background:rgba(204,204,204,.5);box-shadow:0 1px 0 rgba(204,204,204,.28)"></i><i style="left:24px;top:98px;width:7px;background:rgba(156,220,254,.5);box-shadow:0 1px 0 rgba(156,220,254,.28)"></i><i style="left:31px;top:98px;width:1px;background:rgba(204,204,204,.5);box-shadow:0 1px 0 rgba(204,204,204,.28)"></i><i style="left:33px;top:98px;width:2px;background:rgba(86,156,214,.5);box-shadow:0 1px 0 rgba(86,156,214,.28)"></i><i style="left:36px;top:98px;width:1px;background:rgba(204,204,204,.5);box-shadow:0 1px 0 rgba(204,204,204,.28)"></i><i style="left:20px;top:100px;width:2px;background:rgba(197,134,192,.5);box-shadow:0 1px 0 rgba(197,134,192,.28)"></i><i style="left:23px;top:100px;width:1px;background:rgba(204,204,204,.5);box-shadow:0 1px 0 rgba(204,204,204,.28)"></i><i style="left:24px;top:100px;width:5px;background:rgba(156,220,254,.5);box-shadow:0 1px 0 rgba(156,220,254,.28)"></i><i style="left:29px;top:100px;width:1px;background:rgba(204,204,204,.5);box-shadow:0 1px 0 rgba(204,204,204,.28)"></i><i style="left:31px;top:100px;width:1px;background:rgba(204,204,204,.5);box-shadow:0 1px 0 rgba(204,204,204,.28)"></i><i style="left:24px;top:102px;width:6px;background:rgba(220,220,170,.5);box-shadow:0 1px 0 rgba(220,220,170,.28)"></i><i style="left:30px;top:102px;width:1px;background:rgba(204,204,204,.5);box-shadow:0 1px 0 rgba(204,204,204,.28)"></i><i style="left:31px;top:102px;width:5px;background:rgba(156,220,254,.5);box-shadow:0 1px 0 rgba(156,220,254,.28)"></i><i style="left:36px;top:102px;width:1px;background:rgba(204,204,204,.5);box-shadow:0 1px 0 rgba(204,204,204,.28)"></i><i style="left:37px;top:102px;width:1px;background:rgba(204,204,204,.5);box-shadow:0 1px 0 rgba(204,204,204,.28)"></i><i style="left:20px;top:104px;width:1px;background:rgba(204,204,204,.5);box-shadow:0 1px 0 rgba(204,204,204,.28)"></i><i style="left:20px;top:106px;width:2px;background:rgba(197,134,192,.5);box-shadow:0 1px 0 rgba(197,134,192,.28)"></i><i style="left:23px;top:106px;width:1px;background:rgba(204,204,204,.5);box-shadow:0 1px 0 rgba(204,204,204,.28)"></i><i style="left:24px;top:106px;width:7px;background:rgba(156,220,254,.5);box-shadow:0 1px 0 rgba(156,220,254,.28)"></i><i style="left:32px;top:106px;width:1px;background:rgba(204,204,204,.5);box-shadow:0 1px 0 rgba(204,204,204,.28)"></i><i style="left:33px;top:106px;width:1px;background:rgba(204,204,204,.5);box-shadow:0 1px 0 rgba(204,204,204,.28)"></i><i style="left:35px;top:106px;width:7px;background:rgba(156,220,254,.5);box-shadow:0 1px 0 rgba(156,220,254,.28)"></i><i style="left:42px;top:106px;width:1px;background:rgba(204,204,204,.5);box-shadow:0 1px 0 rgba(204,204,204,.28)"></i><i style="left:43px;top:106px;width:4px;background:rgba(156,220,254,.5);box-shadow:0 1px 0 rgba(156,220,254,.28)"></i><i style="left:47px;top:106px;width:1px;background:rgba(204,204,204,.5);box-shadow:0 1px 0 rgba(204,204,204,.28)"></i><i style="left:49px;top:106px;width:1px;background:rgba(204,204,204,.5);box-shadow:0 1px 0 rgba(204,204,204,.28)"></i><i style="left:24px;top:108px;width:7px;background:rgba(220,220,170,.5);box-shadow:0 1px 0 rgba(220,220,170,.28)"></i><i style="left:31px;top:108px;width:1px;background:rgba(204,204,204,.5);box-shadow:0 1px 0 rgba(204,204,204,.28)"></i><i style="left:32px;top:108px;width:7px;background:rgba(156,220,254,.5);box-shadow:0 1px 0 rgba(156,220,254,.28)"></i><i style="left:39px;top:108px;width:1px;background:rgba(204,204,204,.5);box-shadow:0 1px 0 rgba(204,204,204,.28)"></i><i style="left:40px;top:108px;width:4px;background:rgba(156,220,254,.5);box-shadow:0 1px 0 rgba(156,220,254,.28)"></i><i style="left:44px;top:108px;width:1px;background:rgba(204,204,204,.5);box-shadow:0 1px 0 rgba(204,204,204,.28)"></i><i style="left:45px;top:108px;width:1px;background:rgba(204,204,204,.5);box-shadow:0 1px 0 rgba(204,204,204,.28)"></i><i style="left:20px;top:110px;width:1px;background:rgba(204,204,204,.5);box-shadow:0 1px 0 rgba(204,204,204,.28)"></i><i style="left:22px;top:110px;width:4px;background:rgba(197,134,192,.5);box-shadow:0 1px 0 rgba(197,134,192,.28)"></i><i style="left:27px;top:110px;width:1px;background:rgba(204,204,204,.5);box-shadow:0 1px 0 rgba(204,204,204,.28)"></i><i style="left:24px;top:112px;width:6px;background:rgba(220,220,170,.5);box-shadow:0 1px 0 rgba(220,220,170,.28)"></i><i style="left:30px;top:112px;width:1px;background:rgba(204,204,204,.5);box-shadow:0 1px 0 rgba(204,204,204,.28)"></i><i style="left:31px;top:112px;width:3px;background:rgba(86,156,214,.5);box-shadow:0 1px 0 rgba(86,156,214,.28)"></i><i style="left:35px;top:112px;width:5px;background:rgba(78,201,176,.5);box-shadow:0 1px 0 rgba(78,201,176,.28)"></i><i style="left:40px;top:112px;width:1px;background:rgba(204,204,204,.5);box-shadow:0 1px 0 rgba(204,204,204,.28)"></i><i style="left:41px;top:112px;width:3px;background:rgba(206,145,120,.5);box-shadow:0 1px 0 rgba(206,145,120,.28)"></i><i style="left:45px;top:112px;width:7px;background:rgba(206,145,120,.5);box-shadow:0 1px 0 rgba(206,145,120,.28)"></i><i style="left:53px;top:112px;width:6px;background:rgba(206,145,120,.5);box-shadow:0 1px 0 rgba(206,145,120,.28)"></i><i style="left:59px;top:112px;width:1px;background:rgba(204,204,204,.5);box-shadow:0 1px 0 rgba(204,204,204,.28)"></i><i style="left:60px;top:112px;width:1px;background:rgba(204,204,204,.5);box-shadow:0 1px 0 rgba(204,204,204,.28)"></i><i style="left:61px;top:112px;width:1px;background:rgba(204,204,204,.5);box-shadow:0 1px 0 rgba(204,204,204,.28)"></i><i style="left:20px;top:114px;width:1px;background:rgba(204,204,204,.5);box-shadow:0 1px 0 rgba(204,204,204,.28)"></i><i style="left:16px;top:116px;width:1px;background:rgba(204,204,204,.5);box-shadow:0 1px 0 rgba(204,204,204,.28)"></i><i style="left:12px;top:118px;width:1px;background:rgba(204,204,204,.5);box-shadow:0 1px 0 rgba(204,204,204,.28)"></i><i style="left:13px;top:118px;width:1px;background:rgba(204,204,204,.5);box-shadow:0 1px 0 rgba(204,204,204,.28)"></i><i style="left:8px;top:120px;width:1px;background:rgba(204,204,204,.5);box-shadow:0 1px 0 rgba(204,204,204,.28)"></i><i style="left:9px;top:120px;width:1px;background:rgba(204,204,204,.5);box-shadow:0 1px 0 rgba(204,204,204,.28)"></i><i style="left:10px;top:120px;width:1px;background:rgba(204,204,204,.5);box-shadow:0 1px 0 rgba(204,204,204,.28)"></i><i style="left:4px;top:122px;width:1px;background:rgba(204,204,204,.5);box-shadow:0 1px 0 rgba(204,204,204,.28)"></i><i style="left:6px;top:122px;width:5px;background:rgba(197,134,192,.5);box-shadow:0 1px 0 rgba(197,134,192,.28)"></i><i style="left:12px;top:122px;width:1px;background:rgba(204,204,204,.5);box-shadow:0 1px 0 rgba(204,204,204,.28)"></i><i style="left:13px;top:122px;width:7px;background:rgba(156,220,254,.5);box-shadow:0 1px 0 rgba(156,220,254,.28)"></i><i style="left:20px;top:122px;width:1px;background:rgba(204,204,204,.5);box-shadow:0 1px 0 rgba(204,204,204,.28)"></i><i style="left:22px;top:122px;width:1px;background:rgba(204,204,204,.5);box-shadow:0 1px 0 rgba(204,204,204,.28)"></i><i style="left:8px;top:124px;width:7px;background:rgba(156,220,254,.5);box-shadow:0 1px 0 rgba(156,220,254,.28)"></i><i style="left:15px;top:124px;width:1px;background:rgba(204,204,204,.5);box-shadow:0 1px 0 rgba(204,204,204,.28)"></i><i style="left:16px;top:124px;width:5px;background:rgba(220,220,170,.5);box-shadow:0 1px 0 rgba(220,220,170,.28)"></i><i style="left:21px;top:124px;width:1px;background:rgba(204,204,204,.5);box-shadow:0 1px 0 rgba(204,204,204,.28)"></i><i style="left:22px;top:124px;width:7px;background:rgba(156,220,254,.5);box-shadow:0 1px 0 rgba(156,220,254,.28)"></i><i style="left:29px;top:124px;width:1px;background:rgba(204,204,204,.5);box-shadow:0 1px 0 rgba(204,204,204,.28)"></i><i style="left:30px;top:124px;width:1px;background:rgba(204,204,204,.5);box-shadow:0 1px 0 rgba(204,204,204,.28)"></i><i style="left:8px;top:126px;width:5px;background:rgba(197,134,192,.5);box-shadow:0 1px 0 rgba(197,134,192,.28)"></i><i style="left:14px;top:126px;width:3px;background:rgba(86,156,214,.5);box-shadow:0 1px 0 rgba(86,156,214,.28)"></i><i style="left:18px;top:126px;width:5px;background:rgba(78,201,176,.5);box-shadow:0 1px 0 rgba(78,201,176,.28)"></i><i style="left:23px;top:126px;width:1px;background:rgba(204,204,204,.5);box-shadow:0 1px 0 rgba(204,204,204,.28)"></i><i style="left:24px;top:126px;width:9px;background:rgba(206,145,120,.5);box-shadow:0 1px 0 rgba(206,145,120,.28)"></i><i style="left:34px;top:126px;width:6px;background:rgba(206,145,120,.5);box-shadow:0 1px 0 rgba(206,145,120,.28)"></i><i style="left:41px;top:126px;width:6px;background:rgba(206,145,120,.5);box-shadow:0 1px 0 rgba(206,145,120,.28)"></i><i style="left:47px;top:126px;width:1px;background:rgba(204,204,204,.5);box-shadow:0 1px 0 rgba(204,204,204,.28)"></i><i style="left:48px;top:126px;width:1px;background:rgba(204,204,204,.5);box-shadow:0 1px 0 rgba(204,204,204,.28)"></i><i style="left:4px;top:128px;width:1px;background:rgba(204,204,204,.5);box-shadow:0 1px 0 rgba(204,204,204,.28)"></i><i style="left:0px;top:130px;width:1px;background:rgba(204,204,204,.5);box-shadow:0 1px 0 rgba(204,204,204,.28)"></i><i style="left:1px;top:130px;width:1px;background:rgba(204,204,204,.5);box-shadow:0 1px 0 rgba(204,204,204,.28)"></i><i style="left:0px;top:134px;width:2px;background:rgba(106,153,85,.5);box-shadow:0 1px 0 rgba(106,153,85,.28)"></i><i style="left:3px;top:134px;width:6px;background:rgba(106,153,85,.5);box-shadow:0 1px 0 rgba(106,153,85,.28)"></i><i style="left:10px;top:134px;width:3px;background:rgba(106,153,85,.5);box-shadow:0 1px 0 rgba(106,153,85,.28)"></i><i style="left:14px;top:134px;width:6px;background:rgba(106,153,85,.5);box-shadow:0 1px 0 rgba(106,153,85,.28)"></i><i style="left:0px;top:136px;width:5px;background:rgba(86,156,214,.5);box-shadow:0 1px 0 rgba(86,156,214,.28)"></i><i style="left:6px;top:136px;width:12px;background:rgba(220,220,170,.5);box-shadow:0 1px 0 rgba(220,220,170,.28)"></i><i style="left:19px;top:136px;width:1px;background:rgba(204,204,204,.5);box-shadow:0 1px 0 rgba(204,204,204,.28)"></i><i style="left:21px;top:136px;width:5px;background:rgba(86,156,214,.5);box-shadow:0 1px 0 rgba(86,156,214,.28)"></i><i style="left:27px;top:136px;width:1px;background:rgba(204,204,204,.5);box-shadow:0 1px 0 rgba(204,204,204,.28)"></i><i style="left:28px;top:136px;width:4px;background:rgba(156,220,254,.5);box-shadow:0 1px 0 rgba(156,220,254,.28)"></i><i style="left:32px;top:136px;width:1px;background:rgba(204,204,204,.5);box-shadow:0 1px 0 rgba(204,204,204,.28)"></i><i style="left:34px;top:136px;width:2px;background:rgba(86,156,214,.5);box-shadow:0 1px 0 rgba(86,156,214,.28)"></i><i style="left:37px;top:136px;width:1px;background:rgba(204,204,204,.5);box-shadow:0 1px 0 rgba(204,204,204,.28)"></i><i style="left:4px;top:138px;width:6px;background:rgba(197,134,192,.5);box-shadow:0 1px 0 rgba(197,134,192,.28)"></i><i style="left:11px;top:138px;width:3px;background:rgba(86,156,214,.5);box-shadow:0 1px 0 rgba(86,156,214,.28)"></i><i style="left:15px;top:138px;width:7px;background:rgba(78,201,176,.5);box-shadow:0 1px 0 rgba(78,201,176,.28)"></i><i style="left:22px;top:138px;width:1px;background:rgba(204,204,204,.5);box-shadow:0 1px 0 rgba(204,204,204,.28)"></i><i style="left:23px;top:138px;width:8px;background:rgba(86,156,214,.5);box-shadow:0 1px 0 rgba(86,156,214,.28)"></i><i style="left:32px;top:138px;width:1px;background:rgba(204,204,204,.5);box-shadow:0 1px 0 rgba(204,204,204,.28)"></i><i style="left:33px;top:138px;width:7px;background:rgba(156,220,254,.5);box-shadow:0 1px 0 rgba(156,220,254,.28)"></i><i style="left:40px;top:138px;width:1px;background:rgba(204,204,204,.5);box-shadow:0 1px 0 rgba(204,204,204,.28)"></i><i style="left:42px;top:138px;width:6px;background:rgba(156,220,254,.5);box-shadow:0 1px 0 rgba(156,220,254,.28)"></i><i style="left:48px;top:138px;width:1px;background:rgba(204,204,204,.5);box-shadow:0 1px 0 rgba(204,204,204,.28)"></i><i style="left:50px;top:138px;width:1px;background:rgba(204,204,204,.5);box-shadow:0 1px 0 rgba(204,204,204,.28)"></i><i style="left:8px;top:140px;width:5px;background:rgba(86,156,214,.5);box-shadow:0 1px 0 rgba(86,156,214,.28)"></i><i style="left:14px;top:140px;width:1px;background:rgba(204,204,204,.5);box-shadow:0 1px 0 rgba(204,204,204,.28)"></i><i style="left:12px;top:142px;width:3px;background:rgba(79,193,255,.5);box-shadow:0 1px 0 rgba(79,193,255,.28)"></i><i style="left:15px;top:142px;width:1px;background:rgba(204,204,204,.5);box-shadow:0 1px 0 rgba(204,204,204,.28)"></i><i style="left:12px;top:144px;width:6px;background:rgba(79,193,255,.5);box-shadow:0 1px 0 rgba(79,193,255,.28)"></i><i style="left:18px;top:144px;width:1px;background:rgba(204,204,204,.5);box-shadow:0 1px 0 rgba(204,204,204,.28)"></i><i style="left:12px;top:146px;width:9px;background:rgba(79,193,255,.5);box-shadow:0 1px 0 rgba(79,193,255,.28)"></i><i style="left:21px;top:146px;width:1px;background:rgba(204,204,204,.5);box-shadow:0 1px 0 rgba(204,204,204,.28)"></i><i style="left:12px;top:148px;width:5px;background:rgba(79,193,255,.5);box-shadow:0 1px 0 rgba(79,193,255,.28)"></i><i style="left:17px;top:148px;width:1px;background:rgba(204,204,204,.5);box-shadow:0 1px 0 rgba(204,204,204,.28)"></i><i style="left:12px;top:150px;width:6px;background:rgba(79,193,255,.5);box-shadow:0 1px 0 rgba(79,193,255,.28)"></i><i style="left:18px;top:150px;width:1px;background:rgba(204,204,204,.5);box-shadow:0 1px 0 rgba(204,204,204,.28)"></i><i style="left:12px;top:152px;width:4px;background:rgba(79,193,255,.5);box-shadow:0 1px 0 rgba(79,193,255,.28)"></i><i style="left:16px;top:152px;width:1px;background:rgba(204,204,204,.5);box-shadow:0 1px 0 rgba(204,204,204,.28)"></i><i style="left:12px;top:154px;width:6px;background:rgba(79,193,255,.5);box-shadow:0 1px 0 rgba(79,193,255,.28)"></i><i style="left:18px;top:154px;width:1px;background:rgba(204,204,204,.5);box-shadow:0 1px 0 rgba(204,204,204,.28)"></i><i style="left:12px;top:156px;width:6px;background:rgba(79,193,255,.5);box-shadow:0 1px 0 rgba(79,193,255,.28)"></i><i style="left:18px;top:156px;width:1px;background:rgba(204,204,204,.5);box-shadow:0 1px 0 rgba(204,204,204,.28)"></i><i style="left:8px;top:158px;width:1px;background:rgba(204,204,204,.5);box-shadow:0 1px 0 rgba(204,204,204,.28)"></i><i style="left:10px;top:158px;width:1px;background:rgba(204,204,204,.5);box-shadow:0 1px 0 rgba(204,204,204,.28)"></i><i style="left:12px;top:158px;width:4px;background:rgba(156,220,254,.5);box-shadow:0 1px 0 rgba(156,220,254,.28)"></i><i style="left:16px;top:158px;width:1px;background:rgba(204,204,204,.5);box-shadow:0 1px 0 rgba(204,204,204,.28)"></i><i style="left:8px;top:160px;width:7px;background:rgba(156,220,254,.5);box-shadow:0 1px 0 rgba(156,220,254,.28)"></i><i style="left:15px;top:160px;width:1px;background:rgba(204,204,204,.5);box-shadow:0 1px 0 rgba(204,204,204,.28)"></i><i style="left:16px;top:160px;width:3px;background:rgba(220,220,170,.5);box-shadow:0 1px 0 rgba(220,220,170,.28)"></i><i style="left:19px;top:160px;width:1px;background:rgba(204,204,204,.5);box-shadow:0 1px 0 rgba(204,204,204,.28)"></i><i style="left:20px;top:160px;width:3px;background:rgba(79,193,255,.5);box-shadow:0 1px 0 rgba(79,193,255,.28)"></i><i style="left:23px;top:160px;width:1px;background:rgba(204,204,204,.5);box-shadow:0 1px 0 rgba(204,204,204,.28)"></i><i style="left:25px;top:160px;width:6px;background:rgba(79,193,255,.5);box-shadow:0 1px 0 rgba(79,193,255,.28)"></i><i style="left:31px;top:160px;width:1px;background:rgba(204,204,204,.5);box-shadow:0 1px 0 rgba(204,204,204,.28)"></i><i style="left:33px;top:160px;width:9px;background:rgba(79,193,255,.5);box-shadow:0 1px 0 rgba(79,193,255,.28)"></i><i style="left:42px;top:160px;width:1px;background:rgba(204,204,204,.5);box-shadow:0 1px 0 rgba(204,204,204,.28)"></i><i style="left:43px;top:160px;width:1px;background:rgba(204,204,204,.5);box-shadow:0 1px 0 rgba(204,204,204,.28)"></i><i style="left:8px;top:162px;width:4px;background:rgba(79,193,255,.5);box-shadow:0 1px 0 rgba(79,193,255,.28)"></i><i style="left:12px;top:162px;width:1px;background:rgba(204,204,204,.5);box-shadow:0 1px 0 rgba(204,204,204,.28)"></i><i style="left:13px;top:162px;width:5px;background:rgba(220,220,170,.5);box-shadow:0 1px 0 rgba(220,220,170,.28)"></i><i style="left:18px;top:162px;width:1px;background:rgba(204,204,204,.5);box-shadow:0 1px 0 rgba(204,204,204,.28)"></i><i style="left:12px;top:164px;width:7px;background:rgba(206,145,120,.5);box-shadow:0 1px 0 rgba(206,145,120,.28)"></i><i style="left:20px;top:164px;width:4px;background:rgba(206,145,120,.5);box-shadow:0 1px 0 rgba(206,145,120,.28)"></i><i style="left:25px;top:164px;width:9px;background:rgba(206,145,120,.5);box-shadow:0 1px 0 rgba(206,145,120,.28)"></i><i style="left:35px;top:164px;width:5px;background:rgba(206,145,120,.5);box-shadow:0 1px 0 rgba(206,145,120,.28)"></i><i style="left:41px;top:164px;width:5px;background:rgba(206,145,120,.5);box-shadow:0 1px 0 rgba(206,145,120,.28)"></i><i style="left:47px;top:164px;width:10px;background:rgba(206,145,120,.5);box-shadow:0 1px 0 rgba(206,145,120,.28)"></i><i style="left:58px;top:164px;width:6px;background:rgba(206,145,120,.5);box-shadow:0 1px 0 rgba(206,145,120,.28)"></i><i style="left:65px;top:164px;width:7px;background:rgba(206,145,120,.5);box-shadow:0 1px 0 rgba(206,145,120,.28)"></i><i style="left:73px;top:164px;width:5px;background:rgba(206,145,120,.5);box-shadow:0 1px 0 rgba(206,145,120,.28)"></i><i style="left:79px;top:164px;width:7px;background:rgba(206,145,120,.5);box-shadow:0 1px 0 rgba(206,145,120,.28)"></i><i style="left:87px;top:164px;width:10px;background:rgba(206,145,120,.5);box-shadow:0 1px 0 rgba(206,145,120,.28)"></i><i style="left:98px;top:164px;width:6px;background:rgba(206,145,120,.5);box-shadow:0 1px 0 rgba(206,145,120,.28)"></i><i style="left:12px;top:166px;width:1px;background:rgba(204,204,204,.5);box-shadow:0 1px 0 rgba(204,204,204,.28)"></i><i style="left:16px;top:168px;width:3px;background:rgba(79,193,255,.5);box-shadow:0 1px 0 rgba(79,193,255,.28)"></i><i style="left:19px;top:168px;width:1px;background:rgba(204,204,204,.5);box-shadow:0 1px 0 rgba(204,204,204,.28)"></i><i style="left:16px;top:170px;width:6px;background:rgba(79,193,255,.5);box-shadow:0 1px 0 rgba(79,193,255,.28)"></i><i style="left:22px;top:170px;width:1px;background:rgba(204,204,204,.5);box-shadow:0 1px 0 rgba(204,204,204,.28)"></i><i style="left:16px;top:172px;width:9px;background:rgba(79,193,255,.5);box-shadow:0 1px 0 rgba(79,193,255,.28)"></i><i style="left:25px;top:172px;width:1px;background:rgba(204,204,204,.5);box-shadow:0 1px 0 rgba(204,204,204,.28)"></i><i style="left:16px;top:174px;width:5px;background:rgba(79,193,255,.5);box-shadow:0 1px 0 rgba(79,193,255,.28)"></i><i style="left:21px;top:174px;width:1px;background:rgba(204,204,204,.5);box-shadow:0 1px 0 rgba(204,204,204,.28)"></i><i style="left:16px;top:176px;width:6px;background:rgba(79,193,255,.5);box-shadow:0 1px 0 rgba(79,193,255,.28)"></i><i style="left:22px;top:176px;width:1px;background:rgba(204,204,204,.5);box-shadow:0 1px 0 rgba(204,204,204,.28)"></i><i style="left:16px;top:178px;width:4px;background:rgba(79,193,255,.5);box-shadow:0 1px 0 rgba(79,193,255,.28)"></i><i style="left:20px;top:178px;width:1px;background:rgba(204,204,204,.5);box-shadow:0 1px 0 rgba(204,204,204,.28)"></i><i style="left:16px;top:180px;width:6px;background:rgba(79,193,255,.5);box-shadow:0 1px 0 rgba(79,193,255,.28)"></i><i style="left:22px;top:180px;width:1px;background:rgba(204,204,204,.5);box-shadow:0 1px 0 rgba(204,204,204,.28)"></i><i style="left:16px;top:182px;width:6px;background:rgba(79,193,255,.5);box-shadow:0 1px 0 rgba(79,193,255,.28)"></i><i style="left:22px;top:182px;width:1px;background:rgba(204,204,204,.5);box-shadow:0 1px 0 rgba(204,204,204,.28)"></i><i style="left:16px;top:184px;width:5px;background:rgba(79,193,255,.5);box-shadow:0 1px 0 rgba(79,193,255,.28)"></i><i style="left:21px;top:184px;width:1px;background:rgba(204,204,204,.5);box-shadow:0 1px 0 rgba(204,204,204,.28)"></i><i style="left:12px;top:186px;width:1px;background:rgba(204,204,204,.5);box-shadow:0 1px 0 rgba(204,204,204,.28)"></i><i style="left:13px;top:186px;width:1px;background:rgba(204,204,204,.5);box-shadow:0 1px 0 rgba(204,204,204,.28)"></i><i style="left:12px;top:188px;width:1px;background:rgba(204,204,204,.5);box-shadow:0 1px 0 rgba(204,204,204,.28)"></i><i style="left:13px;top:188px;width:5px;background:rgba(156,220,254,.5);box-shadow:0 1px 0 rgba(156,220,254,.28)"></i><i style="left:18px;top:188px;width:1px;background:rgba(204,204,204,.5);box-shadow:0 1px 0 rgba(204,204,204,.28)"></i><i style="left:20px;top:188px;width:7px;background:rgba(156,220,254,.5);box-shadow:0 1px 0 rgba(156,220,254,.28)"></i><i style="left:27px;top:188px;width:1px;background:rgba(204,204,204,.5);box-shadow:0 1px 0 rgba(204,204,204,.28)"></i><i style="left:29px;top:188px;width:2px;background:rgba(86,156,214,.5);box-shadow:0 1px 0 rgba(86,156,214,.28)"></i><i style="left:32px;top:188px;width:1px;background:rgba(204,204,204,.5);box-shadow:0 1px 0 rgba(204,204,204,.28)"></i><i style="left:16px;top:190px;width:2px;background:rgba(197,134,192,.5);box-shadow:0 1px 0 rgba(197,134,192,.28)"></i><i style="left:19px;top:190px;width:1px;background:rgba(204,204,204,.5);box-shadow:0 1px 0 rgba(204,204,204,.28)"></i><i style="left:20px;top:190px;width:5px;background:rgba(156,220,254,.5);box-shadow:0 1px 0 rgba(156,220,254,.28)"></i><i style="left:25px;top:190px;width:1px;background:rgba(204,204,204,.5);box-shadow:0 1px 0 rgba(204,204,204,.28)"></i><i style="left:27px;top:190px;width:1px;background:rgba(204,204,204,.5);box-shadow:0 1px 0 rgba(204,204,204,.28)"></i><i style="left:20px;top:192px;width:6px;background:rgba(220,220,170,.5);box-shadow:0 1px 0 rgba(220,220,170,.28)"></i><i style="left:26px;top:192px;width:1px;background:rgba(204,204,204,.5);box-shadow:0 1px 0 rgba(204,204,204,.28)"></i><i style="left:27px;top:192px;width:3px;background:rgba(86,156,214,.5);box-shadow:0 1px 0 rgba(86,156,214,.28)"></i><i style="left:31px;top:192px;width:5px;background:rgba(78,201,176,.5);box-shadow:0 1px 0 rgba(78,201,176,.28)"></i><i style="left:36px;top:192px;width:1px;background:rgba(204,204,204,.5);box-shadow:0 1px 0 rgba(204,204,204,.28)"></i><i style="left:37px;top:192px;width:4px;background:rgba(206,145,120,.5);box-shadow:0 1px 0 rgba(206,145,120,.28)"></i><i style="left:42px;top:192px;width:4px;background:rgba(206,145,120,.5);box-shadow:0 1px 0 rgba(206,145,120,.28)"></i><i style="left:47px;top:192px;width:2px;background:rgba(206,145,120,.5);box-shadow:0 1px 0 rgba(206,145,120,.28)"></i><i style="left:50px;top:192px;width:4px;background:rgba(206,145,120,.5);box-shadow:0 1px 0 rgba(206,145,120,.28)"></i><i style="left:55px;top:192px;width:3px;background:rgba(206,145,120,.5);box-shadow:0 1px 0 rgba(206,145,120,.28)"></i><i style="left:59px;top:192px;width:6px;background:rgba(206,145,120,.5);box-shadow:0 1px 0 rgba(206,145,120,.28)"></i><i style="left:66px;top:192px;width:11px;background:rgba(206,145,120,.5);box-shadow:0 1px 0 rgba(206,145,120,.28)"></i><i style="left:77px;top:192px;width:1px;background:rgba(204,204,204,.5);box-shadow:0 1px 0 rgba(204,204,204,.28)"></i><i style="left:78px;top:192px;width:1px;background:rgba(204,204,204,.5);box-shadow:0 1px 0 rgba(204,204,204,.28)"></i><i style="left:79px;top:192px;width:1px;background:rgba(204,204,204,.5);box-shadow:0 1px 0 rgba(204,204,204,.28)"></i><i style="left:16px;top:194px;width:1px;background:rgba(204,204,204,.5);box-shadow:0 1px 0 rgba(204,204,204,.28)"></i><i style="left:16px;top:196px;width:2px;background:rgba(197,134,192,.5);box-shadow:0 1px 0 rgba(197,134,192,.28)"></i><i style="left:19px;top:196px;width:1px;background:rgba(204,204,204,.5);box-shadow:0 1px 0 rgba(204,204,204,.28)"></i><i style="left:20px;top:196px;width:7px;background:rgba(156,220,254,.5);box-shadow:0 1px 0 rgba(156,220,254,.28)"></i><i style="left:28px;top:196px;width:1px;background:rgba(204,204,204,.5);box-shadow:0 1px 0 rgba(204,204,204,.28)"></i><i style="left:29px;top:196px;width:1px;background:rgba(204,204,204,.5);box-shadow:0 1px 0 rgba(204,204,204,.28)"></i><i style="left:31px;top:196px;width:7px;background:rgba(156,220,254,.5);box-shadow:0 1px 0 rgba(156,220,254,.28)"></i><i style="left:38px;top:196px;width:1px;background:rgba(204,204,204,.5);box-shadow:0 1px 0 rgba(204,204,204,.28)"></i><i style="left:39px;top:196px;width:4px;background:rgba(156,220,254,.5);box-shadow:0 1px 0 rgba(156,220,254,.28)"></i><i style="left:43px;top:196px;width:1px;background:rgba(204,204,204,.5);box-shadow:0 1px 0 rgba(204,204,204,.28)"></i><i style="left:45px;top:196px;width:1px;background:rgba(204,204,204,.5);box-shadow:0 1px 0 rgba(204,204,204,.28)"></i><i style="left:20px;top:198px;width:7px;background:rgba(220,220,170,.5);box-shadow:0 1px 0 rgba(220,220,170,.28)"></i><i style="left:27px;top:198px;width:1px;background:rgba(204,204,204,.5);box-shadow:0 1px 0 rgba(204,204,204,.28)"></i><i style="left:28px;top:198px;width:7px;background:rgba(206,145,120,.5);box-shadow:0 1px 0 rgba(206,145,120,.28)"></i><i style="left:36px;top:198px;width:9px;background:rgba(206,145,120,.5);box-shadow:0 1px 0 rgba(206,145,120,.28)"></i><i style="left:46px;top:198px;width:3px;background:rgba(206,145,120,.5);box-shadow:0 1px 0 rgba(206,145,120,.28)"></i><i style="left:50px;top:198px;width:9px;background:rgba(206,145,120,.5);box-shadow:0 1px 0 rgba(206,145,120,.28)"></i><i style="left:59px;top:198px;width:1px;background:rgba(204,204,204,.5);box-shadow:0 1px 0 rgba(204,204,204,.28)"></i><i style="left:60px;top:198px;width:1px;background:rgba(204,204,204,.5);box-shadow:0 1px 0 rgba(204,204,204,.28)"></i><i style="left:16px;top:200px;width:1px;background:rgba(204,204,204,.5);box-shadow:0 1px 0 rgba(204,204,204,.28)"></i><i style="left:18px;top:200px;width:4px;background:rgba(197,134,192,.5);box-shadow:0 1px 0 rgba(197,134,192,.28)"></i><i style="left:23px;top:200px;width:1px;background:rgba(204,204,204,.5);box-shadow:0 1px 0 rgba(204,204,204,.28)"></i><i style="left:20px;top:202px;width:6px;background:rgba(220,220,170,.5);box-shadow:0 1px 0 rgba(220,220,170,.28)"></i><i style="left:26px;top:202px;width:1px;background:rgba(204,204,204,.5);box-shadow:0 1px 0 rgba(204,204,204,.28)"></i><i style="left:27px;top:202px;width:3px;background:rgba(86,156,214,.5);box-shadow:0 1px 0 rgba(86,156,214,.28)"></i><i style="left:31px;top:202px;width:5px;background:rgba(78,201,176,.5);box-shadow:0 1px 0 rgba(78,201,176,.28)"></i><i style="left:36px;top:202px;width:1px;background:rgba(204,204,204,.5);box-shadow:0 1px 0 rgba(204,204,204,.28)"></i><i style="left:37px;top:202px;width:4px;background:rgba(206,145,120,.5);box-shadow:0 1px 0 rgba(206,145,120,.28)"></i><i style="left:42px;top:202px;width:4px;background:rgba(206,145,120,.5);box-shadow:0 1px 0 rgba(206,145,120,.28)"></i><i style="left:47px;top:202px;width:2px;background:rgba(206,145,120,.5);box-shadow:0 1px 0 rgba(206,145,120,.28)"></i><i style="left:50px;top:202px;width:4px;background:rgba(206,145,120,.5);box-shadow:0 1px 0 rgba(206,145,120,.28)"></i><i style="left:55px;top:202px;width:3px;background:rgba(206,145,120,.5);box-shadow:0 1px 0 rgba(206,145,120,.28)"></i><i style="left:59px;top:202px;width:6px;background:rgba(206,145,120,.5);box-shadow:0 1px 0 rgba(206,145,120,.28)"></i><i style="left:66px;top:202px;width:11px;background:rgba(206,145,120,.5);box-shadow:0 1px 0 rgba(206,145,120,.28)"></i><i style="left:77px;top:202px;width:1px;background:rgba(204,204,204,.5);box-shadow:0 1px 0 rgba(204,204,204,.28)"></i><i style="left:78px;top:202px;width:1px;background:rgba(204,204,204,.5);box-shadow:0 1px 0 rgba(204,204,204,.28)"></i><i style="left:79px;top:202px;width:1px;background:rgba(204,204,204,.5);box-shadow:0 1px 0 rgba(204,204,204,.28)"></i><i style="left:16px;top:204px;width:1px;background:rgba(204,204,204,.5);box-shadow:0 1px 0 rgba(204,204,204,.28)"></i><i style="left:12px;top:206px;width:1px;background:rgba(204,204,204,.5);box-shadow:0 1px 0 rgba(204,204,204,.28)"></i><i style="left:8px;top:208px;width:1px;background:rgba(204,204,204,.5);box-shadow:0 1px 0 rgba(204,204,204,.28)"></i><i style="left:9px;top:208px;width:1px;background:rgba(204,204,204,.5);box-shadow:0 1px 0 rgba(204,204,204,.28)"></i><i style="left:4px;top:210px;width:1px;background:rgba(204,204,204,.5);box-shadow:0 1px 0 rgba(204,204,204,.28)"></i><i style="left:5px;top:210px;width:1px;background:rgba(204,204,204,.5);box-shadow:0 1px 0 rgba(204,204,204,.28)"></i><i style="left:6px;top:210px;width:1px;background:rgba(204,204,204,.5);box-shadow:0 1px 0 rgba(204,204,204,.28)"></i><i style="left:0px;top:212px;width:1px;background:rgba(204,204,204,.5);box-shadow:0 1px 0 rgba(204,204,204,.28)"></i><i style="left:1px;top:212px;width:1px;background:rgba(204,204,204,.5);box-shadow:0 1px 0 rgba(204,204,204,.28)"></i><i style="left:0px;top:216px;width:2px;background:rgba(106,153,85,.5);box-shadow:0 1px 0 rgba(106,153,85,.28)"></i><i style="left:3px;top:216px;width:8px;background:rgba(106,153,85,.5);box-shadow:0 1px 0 rgba(106,153,85,.28)"></i><i style="left:12px;top:216px;width:3px;background:rgba(106,153,85,.5);box-shadow:0 1px 0 rgba(106,153,85,.28)"></i><i style="left:16px;top:216px;width:4px;background:rgba(106,153,85,.5);box-shadow:0 1px 0 rgba(106,153,85,.28)"></i><i style="left:0px;top:218px;width:5px;background:rgba(86,156,214,.5);box-shadow:0 1px 0 rgba(86,156,214,.28)"></i><i style="left:6px;top:218px;width:12px;background:rgba(220,220,170,.5);box-shadow:0 1px 0 rgba(220,220,170,.28)"></i><i style="left:19px;top:218px;width:1px;background:rgba(204,204,204,.5);box-shadow:0 1px 0 rgba(204,204,204,.28)"></i><i style="left:21px;top:218px;width:5px;background:rgba(86,156,214,.5);box-shadow:0 1px 0 rgba(86,156,214,.28)"></i><i style="left:27px;top:218px;width:1px;background:rgba(204,204,204,.5);box-shadow:0 1px 0 rgba(204,204,204,.28)"></i><i style="left:28px;top:218px;width:4px;background:rgba(156,220,254,.5);box-shadow:0 1px 0 rgba(156,220,254,.28)"></i><i style="left:32px;top:218px;width:1px;background:rgba(204,204,204,.5);box-shadow:0 1px 0 rgba(204,204,204,.28)"></i><i style="left:34px;top:218px;width:2px;background:rgba(86,156,214,.5);box-shadow:0 1px 0 rgba(86,156,214,.28)"></i><i style="left:37px;top:218px;width:1px;background:rgba(204,204,204,.5);box-shadow:0 1px 0 rgba(204,204,204,.28)"></i><i style="left:4px;top:220px;width:6px;background:rgba(197,134,192,.5);box-shadow:0 1px 0 rgba(197,134,192,.28)"></i><i style="left:11px;top:220px;width:3px;background:rgba(86,156,214,.5);box-shadow:0 1px 0 rgba(86,156,214,.28)"></i><i style="left:15px;top:220px;width:7px;background:rgba(78,201,176,.5);box-shadow:0 1px 0 rgba(78,201,176,.28)"></i><i style="left:22px;top:220px;width:1px;background:rgba(204,204,204,.5);box-shadow:0 1px 0 rgba(204,204,204,.28)"></i><i style="left:23px;top:220px;width:8px;background:rgba(86,156,214,.5);box-shadow:0 1px 0 rgba(86,156,214,.28)"></i><i style="left:32px;top:220px;width:1px;background:rgba(204,204,204,.5);box-shadow:0 1px 0 rgba(204,204,204,.28)"></i><i style="left:33px;top:220px;width:7px;background:rgba(156,220,254,.5);box-shadow:0 1px 0 rgba(156,220,254,.28)"></i><i style="left:40px;top:220px;width:1px;background:rgba(204,204,204,.5);box-shadow:0 1px 0 rgba(204,204,204,.28)"></i><i style="left:42px;top:220px;width:6px;background:rgba(156,220,254,.5);box-shadow:0 1px 0 rgba(156,220,254,.28)"></i><i style="left:48px;top:220px;width:1px;background:rgba(204,204,204,.5);box-shadow:0 1px 0 rgba(204,204,204,.28)"></i><i style="left:50px;top:220px;width:1px;background:rgba(204,204,204,.5);box-shadow:0 1px 0 rgba(204,204,204,.28)"></i><i style="left:8px;top:222px;width:5px;background:rgba(86,156,214,.5);box-shadow:0 1px 0 rgba(86,156,214,.28)"></i><i style="left:14px;top:222px;width:1px;background:rgba(204,204,204,.5);box-shadow:0 1px 0 rgba(204,204,204,.28)"></i><i style="left:16px;top:222px;width:4px;background:rgba(79,193,255,.5);box-shadow:0 1px 0 rgba(79,193,255,.28)"></i><i style="left:20px;top:222px;width:1px;background:rgba(204,204,204,.5);box-shadow:0 1px 0 rgba(204,204,204,.28)"></i><i style="left:22px;top:222px;width:6px;background:rgba(79,193,255,.5);box-shadow:0 1px 0 rgba(79,193,255,.28)"></i><i style="left:28px;top:222px;width:1px;background:rgba(204,204,204,.5);box-shadow:0 1px 0 rgba(204,204,204,.28)"></i><i style="left:30px;top:222px;width:5px;background:rgba(79,193,255,.5);box-shadow:0 1px 0 rgba(79,193,255,.28)"></i><i style="left:35px;top:222px;width:1px;background:rgba(204,204,204,.5);box-shadow:0 1px 0 rgba(204,204,204,.28)"></i><i style="left:37px;top:222px;width:4px;background:rgba(79,193,255,.5);box-shadow:0 1px 0 rgba(79,193,255,.28)"></i><i style="left:41px;top:222px;width:1px;background:rgba(204,204,204,.5);box-shadow:0 1px 0 rgba(204,204,204,.28)"></i><i style="left:43px;top:222px;width:9px;background:rgba(79,193,255,.5);box-shadow:0 1px 0 rgba(79,193,255,.28)"></i><i style="left:53px;top:222px;width:1px;background:rgba(204,204,204,.5);box-shadow:0 1px 0 rgba(204,204,204,.28)"></i><i style="left:55px;top:222px;width:1px;background:rgba(204,204,204,.5);box-shadow:0 1px 0 rgba(204,204,204,.28)"></i><i style="left:57px;top:222px;width:4px;background:rgba(156,220,254,.5);box-shadow:0 1px 0 rgba(156,220,254,.28)"></i><i style="left:61px;top:222px;width:1px;background:rgba(204,204,204,.5);box-shadow:0 1px 0 rgba(204,204,204,.28)"></i><i style="left:8px;top:226px;width:4px;background:rgba(79,193,255,.5);box-shadow:0 1px 0 rgba(79,193,255,.28)"></i><i style="left:12px;top:226px;width:1px;background:rgba(204,204,204,.5);box-shadow:0 1px 0 rgba(204,204,204,.28)"></i><i style="left:13px;top:226px;width:5px;background:rgba(220,220,170,.5);box-shadow:0 1px 0 rgba(220,220,170,.28)"></i><i style="left:18px;top:226px;width:1px;background:rgba(204,204,204,.5);box-shadow:0 1px 0 rgba(204,204,204,.28)"></i><i style="left:12px;top:228px;width:7px;background:rgba(206,145,120,.5);box-shadow:0 1px 0 rgba(206,145,120,.28)"></i><i style="left:20px;top:228px;width:4px;background:rgba(206,145,120,.5);box-shadow:0 1px 0 rgba(206,145,120,.28)"></i><i style="left:25px;top:228px;width:6px;background:rgba(206,145,120,.5);box-shadow:0 1px 0 rgba(206,145,120,.28)"></i><i style="left:32px;top:228px;width:6px;background:rgba(206,145,120,.5);box-shadow:0 1px 0 rgba(206,145,120,.28)"></i><i style="left:39px;top:228px;width:7px;background:rgba(206,145,120,.5);box-shadow:0 1px 0 rgba(206,145,120,.28)"></i><i style="left:47px;top:228px;width:6px;background:rgba(206,145,120,.5);box-shadow:0 1px 0 rgba(206,145,120,.28)"></i><i style="left:54px;top:228px;width:5px;background:rgba(206,145,120,.5);box-shadow:0 1px 0 rgba(206,145,120,.28)"></i><i style="left:60px;top:228px;width:10px;background:rgba(206,145,120,.5);box-shadow:0 1px 0 rgba(206,145,120,.28)"></i><i style="left:71px;top:228px;width:6px;background:rgba(206,145,120,.5);box-shadow:0 1px 0 rgba(206,145,120,.28)"></i><i style="left:78px;top:228px;width:4px;background:rgba(206,145,120,.5);box-shadow:0 1px 0 rgba(206,145,120,.28)"></i><i style="left:83px;top:228px;width:3px;background:rgba(206,145,120,.5);box-shadow:0 1px 0 rgba(206,145,120,.28)"></i><i style="left:87px;top:228px;width:3px;background:rgba(206,145,120,.5);box-shadow:0 1px 0 rgba(206,145,120,.28)"></i><i style="left:91px;top:228px;width:3px;background:rgba(206,145,120,.5);box-shadow:0 1px 0 rgba(206,145,120,.28)"></i><i style="left:95px;top:228px;width:3px;background:rgba(206,145,120,.5);box-shadow:0 1px 0 rgba(206,145,120,.28)"></i><i style="left:99px;top:228px;width:5px;background:rgba(206,145,120,.5);box-shadow:0 1px 0 rgba(206,145,120,.28)"></i><i style="left:12px;top:230px;width:1px;background:rgba(204,204,204,.5);box-shadow:0 1px 0 rgba(204,204,204,.28)"></i><i style="left:13px;top:230px;width:4px;background:rgba(79,193,255,.5);box-shadow:0 1px 0 rgba(79,193,255,.28)"></i><i style="left:17px;top:230px;width:1px;background:rgba(204,204,204,.5);box-shadow:0 1px 0 rgba(204,204,204,.28)"></i><i style="left:19px;top:230px;width:6px;background:rgba(79,193,255,.5);box-shadow:0 1px 0 rgba(79,193,255,.28)"></i><i style="left:25px;top:230px;width:1px;background:rgba(204,204,204,.5);box-shadow:0 1px 0 rgba(204,204,204,.28)"></i><i style="left:27px;top:230px;width:5px;background:rgba(79,193,255,.5);box-shadow:0 1px 0 rgba(79,193,255,.28)"></i><i style="left:32px;top:230px;width:1px;background:rgba(204,204,204,.5);box-shadow:0 1px 0 rgba(204,204,204,.28)"></i><i style="left:34px;top:230px;width:4px;background:rgba(79,193,255,.5);box-shadow:0 1px 0 rgba(79,193,255,.28)"></i><i style="left:38px;top:230px;width:1px;background:rgba(204,204,204,.5);box-shadow:0 1px 0 rgba(204,204,204,.28)"></i><i style="left:40px;top:230px;width:9px;background:rgba(79,193,255,.5);box-shadow:0 1px 0 rgba(79,193,255,.28)"></i><i style="left:49px;top:230px;width:1px;background:rgba(204,204,204,.5);box-shadow:0 1px 0 rgba(204,204,204,.28)"></i><i style="left:50px;top:230px;width:1px;background:rgba(204,204,204,.5);box-shadow:0 1px 0 rgba(204,204,204,.28)"></i><i style="left:12px;top:232px;width:1px;background:rgba(204,204,204,.5);box-shadow:0 1px 0 rgba(204,204,204,.28)"></i><i style="left:13px;top:232px;width:5px;background:rgba(156,220,254,.5);box-shadow:0 1px 0 rgba(156,220,254,.28)"></i><i style="left:18px;top:232px;width:1px;background:rgba(204,204,204,.5);box-shadow:0 1px 0 rgba(204,204,204,.28)"></i><i style="left:20px;top:232px;width:7px;background:rgba(156,220,254,.5);box-shadow:0 1px 0 rgba(156,220,254,.28)"></i><i style="left:27px;top:232px;width:1px;background:rgba(204,204,204,.5);box-shadow:0 1px 0 rgba(204,204,204,.28)"></i><i style="left:29px;top:232px;width:2px;background:rgba(86,156,214,.5);box-shadow:0 1px 0 rgba(86,156,214,.28)"></i><i style="left:32px;top:232px;width:1px;background:rgba(204,204,204,.5);box-shadow:0 1px 0 rgba(204,204,204,.28)"></i><i style="left:16px;top:234px;width:2px;background:rgba(197,134,192,.5);box-shadow:0 1px 0 rgba(197,134,192,.28)"></i><i style="left:19px;top:234px;width:1px;background:rgba(204,204,204,.5);box-shadow:0 1px 0 rgba(204,204,204,.28)"></i><i style="left:20px;top:234px;width:5px;background:rgba(156,220,254,.5);box-shadow:0 1px 0 rgba(156,220,254,.28)"></i><i style="left:25px;top:234px;width:1px;background:rgba(204,204,204,.5);box-shadow:0 1px 0 rgba(204,204,204,.28)"></i><i style="left:27px;top:234px;width:1px;background:rgba(204,204,204,.5);box-shadow:0 1px 0 rgba(204,204,204,.28)"></i><i style="left:20px;top:236px;width:6px;background:rgba(220,220,170,.5);box-shadow:0 1px 0 rgba(220,220,170,.28)"></i><i style="left:26px;top:236px;width:1px;background:rgba(204,204,204,.5);box-shadow:0 1px 0 rgba(204,204,204,.28)"></i><i style="left:27px;top:236px;width:5px;background:rgba(156,220,254,.5);box-shadow:0 1px 0 rgba(156,220,254,.28)"></i><i style="left:32px;top:236px;width:1px;background:rgba(204,204,204,.5);box-shadow:0 1px 0 rgba(204,204,204,.28)"></i><i style="left:33px;top:236px;width:1px;background:rgba(204,204,204,.5);box-shadow:0 1px 0 rgba(204,204,204,.28)"></i><i style="left:16px;top:238px;width:1px;background:rgba(204,204,204,.5);box-shadow:0 1px 0 rgba(204,204,204,.28)"></i><i style="left:16px;top:240px;width:2px;background:rgba(197,134,192,.5);box-shadow:0 1px 0 rgba(197,134,192,.28)"></i><i style="left:19px;top:240px;width:1px;background:rgba(204,204,204,.5);box-shadow:0 1px 0 rgba(204,204,204,.28)"></i><i style="left:20px;top:240px;width:7px;background:rgba(156,220,254,.5);box-shadow:0 1px 0 rgba(156,220,254,.28)"></i><i style="left:28px;top:240px;width:1px;background:rgba(204,204,204,.5);box-shadow:0 1px 0 rgba(204,204,204,.28)"></i><i style="left:29px;top:240px;width:1px;background:rgba(204,204,204,.5);box-shadow:0 1px 0 rgba(204,204,204,.28)"></i><i style="left:31px;top:240px;width:7px;background:rgba(156,220,254,.5);box-shadow:0 1px 0 rgba(156,220,254,.28)"></i><i style="left:38px;top:240px;width:1px;background:rgba(204,204,204,.5);box-shadow:0 1px 0 rgba(204,204,204,.28)"></i><i style="left:39px;top:240px;width:4px;background:rgba(156,220,254,.5);box-shadow:0 1px 0 rgba(156,220,254,.28)"></i><i style="left:43px;top:240px;width:1px;background:rgba(204,204,204,.5);box-shadow:0 1px 0 rgba(204,204,204,.28)"></i><i style="left:45px;top:240px;width:1px;background:rgba(204,204,204,.5);box-shadow:0 1px 0 rgba(204,204,204,.28)"></i><i style="left:20px;top:242px;width:7px;background:rgba(220,220,170,.5);box-shadow:0 1px 0 rgba(220,220,170,.28)"></i><i style="left:27px;top:242px;width:1px;background:rgba(204,204,204,.5);box-shadow:0 1px 0 rgba(204,204,204,.28)"></i><i style="left:28px;top:242px;width:8px;background:rgba(206,145,120,.5);box-shadow:0 1px 0 rgba(206,145,120,.28)"></i><i style="left:37px;top:242px;width:3px;background:rgba(206,145,120,.5);box-shadow:0 1px 0 rgba(206,145,120,.28)"></i><i style="left:41px;top:242px;width:9px;background:rgba(206,145,120,.5);box-shadow:0 1px 0 rgba(206,145,120,.28)"></i><i style="left:50px;top:242px;width:1px;background:rgba(204,204,204,.5);box-shadow:0 1px 0 rgba(204,204,204,.28)"></i><i style="left:51px;top:242px;width:1px;background:rgba(204,204,204,.5);box-shadow:0 1px 0 rgba(204,204,204,.28)"></i><i style="left:16px;top:244px;width:1px;background:rgba(204,204,204,.5);box-shadow:0 1px 0 rgba(204,204,204,.28)"></i><i style="left:18px;top:244px;width:4px;background:rgba(197,134,192,.5);box-shadow:0 1px 0 rgba(197,134,192,.28)"></i><i style="left:23px;top:244px;width:1px;background:rgba(204,204,204,.5);box-shadow:0 1px 0 rgba(204,204,204,.28)"></i><i style="left:20px;top:246px;width:6px;background:rgba(220,220,170,.5);box-shadow:0 1px 0 rgba(220,220,170,.28)"></i><i style="left:26px;top:246px;width:1px;background:rgba(204,204,204,.5);box-shadow:0 1px 0 rgba(204,204,204,.28)"></i><i style="left:27px;top:246px;width:3px;background:rgba(86,156,214,.5);box-shadow:0 1px 0 rgba(86,156,214,.28)"></i><i style="left:31px;top:246px;width:5px;background:rgba(78,201,176,.5);box-shadow:0 1px 0 rgba(78,201,176,.28)"></i><i style="left:36px;top:246px;width:1px;background:rgba(204,204,204,.5);box-shadow:0 1px 0 rgba(204,204,204,.28)"></i><i style="left:37px;top:246px;width:4px;background:rgba(206,145,120,.5);box-shadow:0 1px 0 rgba(206,145,120,.28)"></i><i style="left:42px;top:246px;width:4px;background:rgba(206,145,120,.5);box-shadow:0 1px 0 rgba(206,145,120,.28)"></i><i style="left:47px;top:246px;width:2px;background:rgba(206,145,120,.5);box-shadow:0 1px 0 rgba(206,145,120,.28)"></i><i style="left:50px;top:246px;width:4px;background:rgba(206,145,120,.5);box-shadow:0 1px 0 rgba(206,145,120,.28)"></i><i style="left:55px;top:246px;width:3px;background:rgba(206,145,120,.5);box-shadow:0 1px 0 rgba(206,145,120,.28)"></i><i style="left:59px;top:246px;width:9px;background:rgba(206,145,120,.5);box-shadow:0 1px 0 rgba(206,145,120,.28)"></i><i style="left:68px;top:246px;width:1px;background:rgba(204,204,204,.5);box-shadow:0 1px 0 rgba(204,204,204,.28)"></i><i style="left:69px;top:246px;width:1px;background:rgba(204,204,204,.5);box-shadow:0 1px 0 rgba(204,204,204,.28)"></i><i style="left:70px;top:246px;width:1px;background:rgba(204,204,204,.5);box-shadow:0 1px 0 rgba(204,204,204,.28)"></i><i style="left:16px;top:248px;width:1px;background:rgba(204,204,204,.5);box-shadow:0 1px 0 rgba(204,204,204,.28)"></i><i style="left:12px;top:250px;width:1px;background:rgba(204,204,204,.5);box-shadow:0 1px 0 rgba(204,204,204,.28)"></i><i style="left:8px;top:252px;width:1px;background:rgba(204,204,204,.5);box-shadow:0 1px 0 rgba(204,204,204,.28)"></i><i style="left:9px;top:252px;width:1px;background:rgba(204,204,204,.5);box-shadow:0 1px 0 rgba(204,204,204,.28)"></i><i style="left:4px;top:254px;width:1px;background:rgba(204,204,204,.5);box-shadow:0 1px 0 rgba(204,204,204,.28)"></i><i style="left:5px;top:254px;width:1px;background:rgba(204,204,204,.5);box-shadow:0 1px 0 rgba(204,204,204,.28)"></i><i style="left:6px;top:254px;width:1px;background:rgba(204,204,204,.5);box-shadow:0 1px 0 rgba(204,204,204,.28)"></i><i style="left:0px;top:256px;width:1px;background:rgba(204,204,204,.5);box-shadow:0 1px 0 rgba(204,204,204,.28)"></i><i style="left:1px;top:256px;width:1px;background:rgba(204,204,204,.5);box-shadow:0 1px 0 rgba(204,204,204,.28)"></i><i style="left:0px;top:260px;width:2px;background:rgba(106,153,85,.5);box-shadow:0 1px 0 rgba(106,153,85,.28)"></i><i style="left:3px;top:260px;width:3px;background:rgba(106,153,85,.5);box-shadow:0 1px 0 rgba(106,153,85,.28)"></i><i style="left:7px;top:260px;width:6px;background:rgba(106,153,85,.5);box-shadow:0 1px 0 rgba(106,153,85,.28)"></i><i style="left:14px;top:260px;width:9px;background:rgba(106,153,85,.5);box-shadow:0 1px 0 rgba(106,153,85,.28)"></i><i style="left:0px;top:262px;width:5px;background:rgba(86,156,214,.5);box-shadow:0 1px 0 rgba(86,156,214,.28)"></i><i style="left:6px;top:262px;width:12px;background:rgba(220,220,170,.5);box-shadow:0 1px 0 rgba(220,220,170,.28)"></i><i style="left:19px;top:262px;width:1px;background:rgba(204,204,204,.5);box-shadow:0 1px 0 rgba(204,204,204,.28)"></i><i style="left:21px;top:262px;width:5px;background:rgba(86,156,214,.5);box-shadow:0 1px 0 rgba(86,156,214,.28)"></i><i style="left:27px;top:262px;width:1px;background:rgba(204,204,204,.5);box-shadow:0 1px 0 rgba(204,204,204,.28)"></i><i style="left:28px;top:262px;width:4px;background:rgba(156,220,254,.5);box-shadow:0 1px 0 rgba(156,220,254,.28)"></i><i style="left:32px;top:262px;width:1px;background:rgba(204,204,204,.5);box-shadow:0 1px 0 rgba(204,204,204,.28)"></i><i style="left:34px;top:262px;width:2px;background:rgba(86,156,214,.5);box-shadow:0 1px 0 rgba(86,156,214,.28)"></i><i style="left:37px;top:262px;width:1px;background:rgba(204,204,204,.5);box-shadow:0 1px 0 rgba(204,204,204,.28)"></i><i style="left:4px;top:264px;width:7px;background:rgba(156,220,254,.5);box-shadow:0 1px 0 rgba(156,220,254,.28)"></i><i style="left:11px;top:264px;width:1px;background:rgba(204,204,204,.5);box-shadow:0 1px 0 rgba(204,204,204,.28)"></i><i style="left:12px;top:264px;width:3px;background:rgba(220,220,170,.5);box-shadow:0 1px 0 rgba(220,220,170,.28)"></i><i style="left:15px;top:264px;width:1px;background:rgba(204,204,204,.5);box-shadow:0 1px 0 rgba(204,204,204,.28)"></i><i style="left:16px;top:264px;width:4px;background:rgba(156,220,254,.5);box-shadow:0 1px 0 rgba(156,220,254,.28)"></i><i style="left:20px;top:264px;width:1px;background:rgba(204,204,204,.5);box-shadow:0 1px 0 rgba(204,204,204,.28)"></i><i style="left:21px;top:264px;width:1px;background:rgba(204,204,204,.5);box-shadow:0 1px 0 rgba(204,204,204,.28)"></i><i style="left:4px;top:266px;width:3px;background:rgba(197,134,192,.5);box-shadow:0 1px 0 rgba(197,134,192,.28)"></i><i style="left:8px;top:266px;width:1px;background:rgba(204,204,204,.5);box-shadow:0 1px 0 rgba(204,204,204,.28)"></i><i style="left:8px;top:268px;width:6px;background:rgba(197,134,192,.5);box-shadow:0 1px 0 rgba(197,134,192,.28)"></i><i style="left:15px;top:268px;width:5px;background:rgba(197,134,192,.5);box-shadow:0 1px 0 rgba(197,134,192,.28)"></i><i style="left:21px;top:268px;width:3px;background:rgba(86,156,214,.5);box-shadow:0 1px 0 rgba(86,156,214,.28)"></i><i style="left:25px;top:268px;width:7px;background:rgba(78,201,176,.5);box-shadow:0 1px 0 rgba(78,201,176,.28)"></i><i style="left:32px;top:268px;width:1px;background:rgba(204,204,204,.5);box-shadow:0 1px 0 rgba(204,204,204,.28)"></i><i style="left:33px;top:268px;width:8px;background:rgba(86,156,214,.5);box-shadow:0 1px 0 rgba(86,156,214,.28)"></i><i style="left:42px;top:268px;width:1px;background:rgba(204,204,204,.5);box-shadow:0 1px 0 rgba(204,204,204,.28)"></i><i style="left:43px;top:268px;width:7px;background:rgba(156,220,254,.5);box-shadow:0 1px 0 rgba(156,220,254,.28)"></i><i style="left:50px;top:268px;width:1px;background:rgba(204,204,204,.5);box-shadow:0 1px 0 rgba(204,204,204,.28)"></i><i style="left:52px;top:268px;width:6px;background:rgba(156,220,254,.5);box-shadow:0 1px 0 rgba(156,220,254,.28)"></i><i style="left:58px;top:268px;width:1px;background:rgba(204,204,204,.5);box-shadow:0 1px 0 rgba(204,204,204,.28)"></i><i style="left:60px;top:268px;width:1px;background:rgba(204,204,204,.5);box-shadow:0 1px 0 rgba(204,204,204,.28)"></i><i style="left:12px;top:270px;width:4px;background:rgba(79,193,255,.5);box-shadow:0 1px 0 rgba(79,193,255,.28)"></i><i style="left:16px;top:270px;width:1px;background:rgba(204,204,204,.5);box-shadow:0 1px 0 rgba(204,204,204,.28)"></i><i style="left:17px;top:270px;width:5px;background:rgba(220,220,170,.5);box-shadow:0 1px 0 rgba(220,220,170,.28)"></i><i style="left:22px;top:270px;width:1px;background:rgba(204,204,204,.5);box-shadow:0 1px 0 rgba(204,204,204,.28)"></i><i style="left:16px;top:272px;width:7px;background:rgba(206,145,120,.5);box-shadow:0 1px 0 rgba(206,145,120,.28)"></i><i style="left:24px;top:272px;width:1px;background:rgba(206,145,120,.5);box-shadow:0 1px 0 rgba(206,145,120,.28)"></i><i style="left:26px;top:272px;width:4px;background:rgba(206,145,120,.5);box-shadow:0 1px 0 rgba(206,145,120,.28)"></i><i style="left:31px;top:272px;width:9px;background:rgba(206,145,120,.5);box-shadow:0 1px 0 rgba(206,145,120,.28)"></i><i style="left:41px;top:272px;width:2px;background:rgba(206,145,120,.5);box-shadow:0 1px 0 rgba(206,145,120,.28)"></i><i style="left:44px;top:272px;width:1px;background:rgba(206,145,120,.5);box-shadow:0 1px 0 rgba(206,145,120,.28)"></i><i style="left:46px;top:272px;width:5px;background:rgba(206,145,120,.5);box-shadow:0 1px 0 rgba(206,145,120,.28)"></i><i style="left:52px;top:272px;width:9px;background:rgba(206,145,120,.5);box-shadow:0 1px 0 rgba(206,145,120,.28)"></i><i style="left:61px;top:272px;width:1px;background:rgba(204,204,204,.5);box-shadow:0 1px 0 rgba(204,204,204,.28)"></i><i style="left:16px;top:274px;width:1px;background:rgba(204,204,204,.5);box-shadow:0 1px 0 rgba(204,204,204,.28)"></i><i style="left:17px;top:274px;width:4px;background:rgba(156,220,254,.5);box-shadow:0 1px 0 rgba(156,220,254,.28)"></i><i style="left:21px;top:274px;width:1px;background:rgba(204,204,204,.5);box-shadow:0 1px 0 rgba(204,204,204,.28)"></i><i style="left:22px;top:274px;width:1px;background:rgba(204,204,204,.5);box-shadow:0 1px 0 rgba(204,204,204,.28)"></i><i style="left:16px;top:278px;width:1px;background:rgba(204,204,204,.5);box-shadow:0 1px 0 rgba(204,204,204,.28)"></i><i style="left:17px;top:278px;width:5px;background:rgba(156,220,254,.5);box-shadow:0 1px 0 rgba(156,220,254,.28)"></i><i style="left:22px;top:278px;width:1px;background:rgba(204,204,204,.5);box-shadow:0 1px 0 rgba(204,204,204,.28)"></i><i style="left:24px;top:278px;width:7px;background:rgba(156,220,254,.5);box-shadow:0 1px 0 rgba(156,220,254,.28)"></i><i style="left:31px;top:278px;width:1px;background:rgba(204,204,204,.5);box-shadow:0 1px 0 rgba(204,204,204,.28)"></i><i style="left:33px;top:278px;width:2px;background:rgba(86,156,214,.5);box-shadow:0 1px 0 rgba(86,156,214,.28)"></i><i style="left:36px;top:278px;width:1px;background:rgba(204,204,204,.5);box-shadow:0 1px 0 rgba(204,204,204,.28)"></i><i style="left:20px;top:280px;width:2px;background:rgba(197,134,192,.5);box-shadow:0 1px 0 rgba(197,134,192,.28)"></i><i style="left:23px;top:280px;width:1px;background:rgba(204,204,204,.5);box-shadow:0 1px 0 rgba(204,204,204,.28)"></i><i style="left:24px;top:280px;width:5px;background:rgba(156,220,254,.5);box-shadow:0 1px 0 rgba(156,220,254,.28)"></i><i style="left:29px;top:280px;width:1px;background:rgba(204,204,204,.5);box-shadow:0 1px 0 rgba(204,204,204,.28)"></i><i style="left:31px;top:280px;width:1px;background:rgba(204,204,204,.5);box-shadow:0 1px 0 rgba(204,204,204,.28)"></i><i style="left:24px;top:282px;width:6px;background:rgba(220,220,170,.5);box-shadow:0 1px 0 rgba(220,220,170,.28)"></i><i style="left:30px;top:282px;width:1px;background:rgba(204,204,204,.5);box-shadow:0 1px 0 rgba(204,204,204,.28)"></i><i style="left:31px;top:282px;width:5px;background:rgba(156,220,254,.5);box-shadow:0 1px 0 rgba(156,220,254,.28)"></i><i style="left:36px;top:282px;width:1px;background:rgba(204,204,204,.5);box-shadow:0 1px 0 rgba(204,204,204,.28)"></i><i style="left:37px;top:282px;width:1px;background:rgba(204,204,204,.5);box-shadow:0 1px 0 rgba(204,204,204,.28)"></i><i style="left:20px;top:284px;width:1px;background:rgba(204,204,204,.5);box-shadow:0 1px 0 rgba(204,204,204,.28)"></i><i style="left:20px;top:286px;width:2px;background:rgba(197,134,192,.5);box-shadow:0 1px 0 rgba(197,134,192,.28)"></i><i style="left:23px;top:286px;width:1px;background:rgba(204,204,204,.5);box-shadow:0 1px 0 rgba(204,204,204,.28)"></i><i style="left:24px;top:286px;width:7px;background:rgba(156,220,254,.5);box-shadow:0 1px 0 rgba(156,220,254,.28)"></i><i style="left:32px;top:286px;width:1px;background:rgba(204,204,204,.5);box-shadow:0 1px 0 rgba(204,204,204,.28)"></i><i style="left:33px;top:286px;width:1px;background:rgba(204,204,204,.5);box-shadow:0 1px 0 rgba(204,204,204,.28)"></i><i style="left:35px;top:286px;width:7px;background:rgba(156,220,254,.5);box-shadow:0 1px 0 rgba(156,220,254,.28)"></i><i style="left:42px;top:286px;width:1px;background:rgba(204,204,204,.5);box-shadow:0 1px 0 rgba(204,204,204,.28)"></i><i style="left:43px;top:286px;width:4px;background:rgba(156,220,254,.5);box-shadow:0 1px 0 rgba(156,220,254,.28)"></i><i style="left:47px;top:286px;width:1px;background:rgba(204,204,204,.5);box-shadow:0 1px 0 rgba(204,204,204,.28)"></i><i style="left:49px;top:286px;width:1px;background:rgba(204,204,204,.5);box-shadow:0 1px 0 rgba(204,204,204,.28)"></i><i style="left:24px;top:288px;width:7px;background:rgba(220,220,170,.5);box-shadow:0 1px 0 rgba(220,220,170,.28)"></i><i style="left:31px;top:288px;width:1px;background:rgba(204,204,204,.5);box-shadow:0 1px 0 rgba(204,204,204,.28)"></i><i style="left:32px;top:288px;width:7px;background:rgba(156,220,254,.5);box-shadow:0 1px 0 rgba(156,220,254,.28)"></i><i style="left:39px;top:288px;width:1px;background:rgba(204,204,204,.5);box-shadow:0 1px 0 rgba(204,204,204,.28)"></i><i style="left:40px;top:288px;width:4px;background:rgba(156,220,254,.5);box-shadow:0 1px 0 rgba(156,220,254,.28)"></i><i style="left:44px;top:288px;width:1px;background:rgba(204,204,204,.5);box-shadow:0 1px 0 rgba(204,204,204,.28)"></i><i style="left:45px;top:288px;width:1px;background:rgba(204,204,204,.5);box-shadow:0 1px 0 rgba(204,204,204,.28)"></i><i style="left:20px;top:290px;width:1px;background:rgba(204,204,204,.5);box-shadow:0 1px 0 rgba(204,204,204,.28)"></i><i style="left:22px;top:290px;width:4px;background:rgba(197,134,192,.5);box-shadow:0 1px 0 rgba(197,134,192,.28)"></i><i style="left:27px;top:290px;width:1px;background:rgba(204,204,204,.5);box-shadow:0 1px 0 rgba(204,204,204,.28)"></i><i style="left:24px;top:292px;width:6px;background:rgba(220,220,170,.5);box-shadow:0 1px 0 rgba(220,220,170,.28)"></i><i style="left:30px;top:292px;width:1px;background:rgba(204,204,204,.5);box-shadow:0 1px 0 rgba(204,204,204,.28)"></i><i style="left:31px;top:292px;width:3px;background:rgba(86,156,214,.5);box-shadow:0 1px 0 rgba(86,156,214,.28)"></i><i style="left:35px;top:292px;width:5px;background:rgba(78,201,176,.5);box-shadow:0 1px 0 rgba(78,201,176,.28)"></i><i style="left:40px;top:292px;width:1px;background:rgba(204,204,204,.5);box-shadow:0 1px 0 rgba(204,204,204,.28)"></i><i style="left:41px;top:292px;width:3px;background:rgba(206,145,120,.5);box-shadow:0 1px 0 rgba(206,145,120,.28)"></i><i style="left:45px;top:292px;width:7px;background:rgba(206,145,120,.5);box-shadow:0 1px 0 rgba(206,145,120,.28)"></i><i style="left:53px;top:292px;width:6px;background:rgba(206,145,120,.5);box-shadow:0 1px 0 rgba(206,145,120,.28)"></i><i style="left:59px;top:292px;width:1px;background:rgba(204,204,204,.5);box-shadow:0 1px 0 rgba(204,204,204,.28)"></i><i style="left:60px;top:292px;width:1px;background:rgba(204,204,204,.5);box-shadow:0 1px 0 rgba(204,204,204,.28)"></i><i style="left:61px;top:292px;width:1px;background:rgba(204,204,204,.5);box-shadow:0 1px 0 rgba(204,204,204,.28)"></i><i style="left:20px;top:294px;width:1px;background:rgba(204,204,204,.5);box-shadow:0 1px 0 rgba(204,204,204,.28)"></i><i style="left:16px;top:296px;width:1px;background:rgba(204,204,204,.5);box-shadow:0 1px 0 rgba(204,204,204,.28)"></i><i style="left:12px;top:298px;width:1px;background:rgba(204,204,204,.5);box-shadow:0 1px 0 rgba(204,204,204,.28)"></i><i style="left:13px;top:298px;width:1px;background:rgba(204,204,204,.5);box-shadow:0 1px 0 rgba(204,204,204,.28)"></i><i style="left:8px;top:300px;width:1px;background:rgba(204,204,204,.5);box-shadow:0 1px 0 rgba(204,204,204,.28)"></i><i style="left:9px;top:300px;width:1px;background:rgba(204,204,204,.5);box-shadow:0 1px 0 rgba(204,204,204,.28)"></i><i style="left:10px;top:300px;width:1px;background:rgba(204,204,204,.5);box-shadow:0 1px 0 rgba(204,204,204,.28)"></i><i style="left:4px;top:302px;width:1px;background:rgba(204,204,204,.5);box-shadow:0 1px 0 rgba(204,204,204,.28)"></i><i style="left:6px;top:302px;width:5px;background:rgba(197,134,192,.5);box-shadow:0 1px 0 rgba(197,134,192,.28)"></i><i style="left:12px;top:302px;width:1px;background:rgba(204,204,204,.5);box-shadow:0 1px 0 rgba(204,204,204,.28)"></i><i style="left:13px;top:302px;width:7px;background:rgba(156,220,254,.5);box-shadow:0 1px 0 rgba(156,220,254,.28)"></i><i style="left:20px;top:302px;width:1px;background:rgba(204,204,204,.5);box-shadow:0 1px 0 rgba(204,204,204,.28)"></i><i style="left:22px;top:302px;width:1px;background:rgba(204,204,204,.5);box-shadow:0 1px 0 rgba(204,204,204,.28)"></i><i style="left:8px;top:304px;width:7px;background:rgba(156,220,254,.5);box-shadow:0 1px 0 rgba(156,220,254,.28)"></i><i style="left:15px;top:304px;width:1px;background:rgba(204,204,204,.5);box-shadow:0 1px 0 rgba(204,204,204,.28)"></i><i style="left:16px;top:304px;width:5px;background:rgba(220,220,170,.5);box-shadow:0 1px 0 rgba(220,220,170,.28)"></i><i style="left:21px;top:304px;width:1px;background:rgba(204,204,204,.5);box-shadow:0 1px 0 rgba(204,204,204,.28)"></i><i style="left:22px;top:304px;width:7px;background:rgba(156,220,254,.5);box-shadow:0 1px 0 rgba(156,220,254,.28)"></i><i style="left:29px;top:304px;width:1px;background:rgba(204,204,204,.5);box-shadow:0 1px 0 rgba(204,204,204,.28)"></i><i style="left:30px;top:304px;width:1px;background:rgba(204,204,204,.5);box-shadow:0 1px 0 rgba(204,204,204,.28)"></i><i style="left:8px;top:306px;width:5px;background:rgba(197,134,192,.5);box-shadow:0 1px 0 rgba(197,134,192,.28)"></i><i style="left:14px;top:306px;width:3px;background:rgba(86,156,214,.5);box-shadow:0 1px 0 rgba(86,156,214,.28)"></i><i style="left:18px;top:306px;width:5px;background:rgba(78,201,176,.5);box-shadow:0 1px 0 rgba(78,201,176,.28)"></i><i style="left:23px;top:306px;width:1px;background:rgba(204,204,204,.5);box-shadow:0 1px 0 rgba(204,204,204,.28)"></i><i style="left:24px;top:306px;width:9px;background:rgba(206,145,120,.5);box-shadow:0 1px 0 rgba(206,145,120,.28)"></i><i style="left:34px;top:306px;width:6px;background:rgba(206,145,120,.5);box-shadow:0 1px 0 rgba(206,145,120,.28)"></i><i style="left:41px;top:306px;width:6px;background:rgba(206,145,120,.5);box-shadow:0 1px 0 rgba(206,145,120,.28)"></i><i style="left:47px;top:306px;width:1px;background:rgba(204,204,204,.5);box-shadow:0 1px 0 rgba(204,204,204,.28)"></i><i style="left:48px;top:306px;width:1px;background:rgba(204,204,204,.5);box-shadow:0 1px 0 rgba(204,204,204,.28)"></i><i style="left:4px;top:308px;width:1px;background:rgba(204,204,204,.5);box-shadow:0 1px 0 rgba(204,204,204,.28)"></i><i style="left:0px;top:310px;width:1px;background:rgba(204,204,204,.5);box-shadow:0 1px 0 rgba(204,204,204,.28)"></i><i style="left:1px;top:310px;width:1px;background:rgba(204,204,204,.5);box-shadow:0 1px 0 rgba(204,204,204,.28)"></i><i style="left:0px;top:314px;width:6px;background:rgba(78,201,176,.5);box-shadow:0 1px 0 rgba(78,201,176,.28)"></i><i style="left:6px;top:314px;width:1px;background:rgba(204,204,204,.5);box-shadow:0 1px 0 rgba(204,204,204,.28)"></i><i style="left:7px;top:314px;width:7px;background:rgba(78,201,176,.5);box-shadow:0 1px 0 rgba(78,201,176,.28)"></i><i style="left:15px;top:314px;width:1px;background:rgba(204,204,204,.5);box-shadow:0 1px 0 rgba(204,204,204,.28)"></i><i style="left:17px;top:314px;width:1px;background:rgba(204,204,204,.5);box-shadow:0 1px 0 rgba(204,204,204,.28)"></i><i style="left:4px;top:316px;width:11px;background:rgba(220,220,170,.5);box-shadow:0 1px 0 rgba(220,220,170,.28)"></i><i style="left:15px;top:316px;width:1px;background:rgba(204,204,204,.5);box-shadow:0 1px 0 rgba(204,204,204,.28)"></i><i style="left:4px;top:318px;width:10px;background:rgba(220,220,170,.5);box-shadow:0 1px 0 rgba(220,220,170,.28)"></i><i style="left:14px;top:318px;width:1px;background:rgba(204,204,204,.5);box-shadow:0 1px 0 rgba(204,204,204,.28)"></i><i style="left:4px;top:320px;width:12px;background:rgba(220,220,170,.5);box-shadow:0 1px 0 rgba(220,220,170,.28)"></i><i style="left:16px;top:320px;width:1px;background:rgba(204,204,204,.5);box-shadow:0 1px 0 rgba(204,204,204,.28)"></i><i style="left:4px;top:322px;width:12px;background:rgba(220,220,170,.5);box-shadow:0 1px 0 rgba(220,220,170,.28)"></i><i style="left:16px;top:322px;width:1px;background:rgba(204,204,204,.5);box-shadow:0 1px 0 rgba(204,204,204,.28)"></i><i style="left:4px;top:324px;width:12px;background:rgba(220,220,170,.5);box-shadow:0 1px 0 rgba(220,220,170,.28)"></i><i style="left:16px;top:324px;width:1px;background:rgba(204,204,204,.5);box-shadow:0 1px 0 rgba(204,204,204,.28)"></i><i style="left:0px;top:326px;width:1px;background:rgba(204,204,204,.5);box-shadow:0 1px 0 rgba(204,204,204,.28)"></i><i style="left:1px;top:326px;width:1px;background:rgba(204,204,204,.5);box-shadow:0 1px 0 rgba(204,204,204,.28)"></i></div></div>
<div id="vsb" class="abs"></div>
<div id="vsl" class="abs"></div>
<div id="vcur" class="abs"></div>
<div id="hsl" class="abs"></div>
<div id="scrollshadow" class="abs"></div>
</div>
<div id="vsep" class="abs"></div>
<div id="rg" class="abs"></div>
<div id="rgtab" class="abs"></div>
<div class="abs" style="left:1090px;top:62px;width:4px;height:6px;box-shadow:inset 0 6px 6px -6px #000"></div>
<div class="abs" style="left:1090px;top:6px;width:4px;height:34px;background:#1f1f1f"></div>
<div id="bot" class="abs"></div>
<div id="botb" class="abs"></div>
</body></html>
